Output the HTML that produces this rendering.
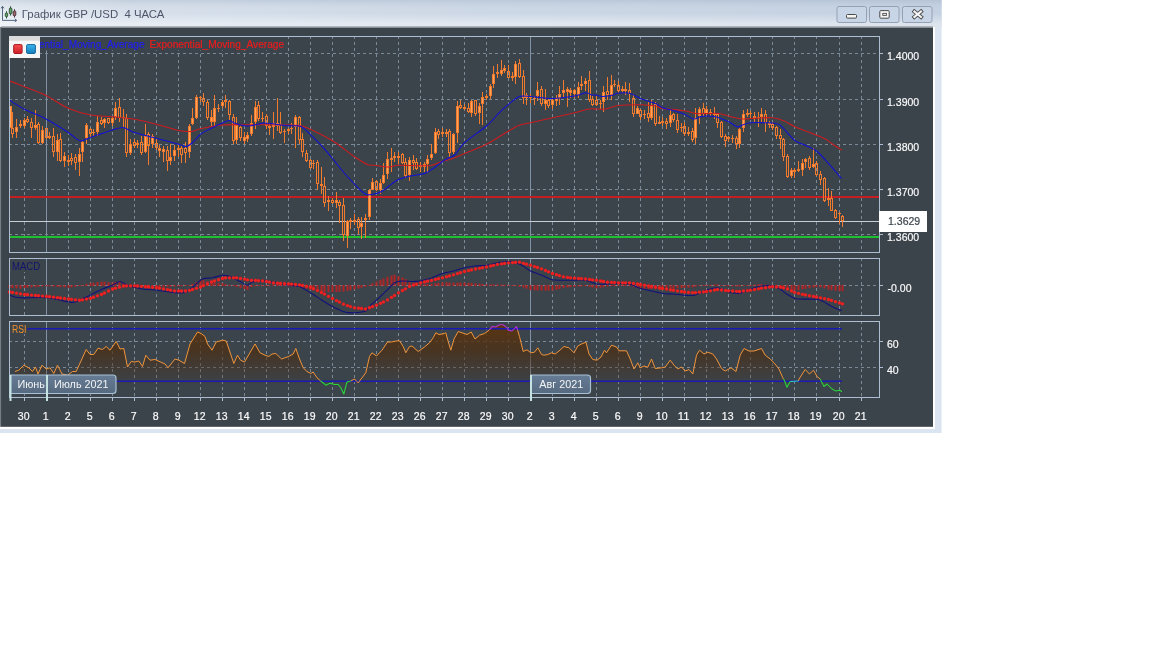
<!DOCTYPE html>
<html lang="ru"><head><meta charset="utf-8"><title>График GBP /USD 4 ЧАСА</title>
<style>html,body{margin:0;padding:0;background:#fff;width:1152px;height:648px;overflow:hidden}svg text{white-space:pre}</style></head>
<body>
<svg width="1152" height="648" viewBox="0 0 1152 648" style="display:block;will-change:transform">
<defs>
<linearGradient id="tb" x1="0" y1="0" x2="1" y2="0"><stop offset="0" stop-color="#e4eaf1"/><stop offset="0.14" stop-color="#d6dfea"/><stop offset="0.5" stop-color="#ccd7e5"/><stop offset="1" stop-color="#c3d0e1"/></linearGradient>
<linearGradient id="tbv" x1="0" y1="0" x2="0" y2="1"><stop offset="0" stop-color="#7f96b0" stop-opacity="0.22"/><stop offset="0.45" stop-color="#ffffff" stop-opacity="0"/><stop offset="0.85" stop-color="#ffffff" stop-opacity="0.42"/><stop offset="1" stop-color="#ffffff" stop-opacity="0.42"/></linearGradient>
<linearGradient id="rsif" gradientUnits="userSpaceOnUse" x1="0" y1="324" x2="0" y2="386"><stop offset="0" stop-color="#5e350e" stop-opacity="0.97"/><stop offset="0.45" stop-color="#4c2e12" stop-opacity="0.7"/><stop offset="1" stop-color="#4a2e14" stop-opacity="0"/></linearGradient>
<linearGradient id="mon" x1="0" y1="0" x2="0" y2="1"><stop offset="0" stop-color="#667c95"/><stop offset="1" stop-color="#56697f"/></linearGradient>
<linearGradient id="redb" x1="0" y1="0" x2="0" y2="1"><stop offset="0" stop-color="#f65050"/><stop offset="1" stop-color="#cc1c26"/></linearGradient>
<linearGradient id="blub" x1="0" y1="0" x2="0" y2="1"><stop offset="0" stop-color="#3cb6ee"/><stop offset="1" stop-color="#147cbc"/></linearGradient>
<clipPath id="cm"><rect x="10" y="36" width="870" height="216"/></clipPath>
<clipPath id="cr"><rect x="10" y="322" width="870" height="75"/></clipPath>
</defs>
<rect width="1152" height="648" fill="#ffffff"/>
<rect x="0" y="0" width="941.6" height="433" fill="#dbe5f1"/>
<rect x="0" y="0" width="941.6" height="28" fill="url(#tb)"/>
<rect x="0" y="0" width="941.6" height="28" fill="url(#tbv)"/>
<rect x="0" y="27" width="935" height="402" fill="#ffffff"/>
<rect x="1" y="27.5" width="932" height="399.3" fill="#3b434b"/>
<rect x="0" y="27" width="1.1" height="399.8" fill="#767d85"/>
<rect x="1" y="26" width="932" height="1" fill="#9aa0a6" opacity="0.7"/><rect x="1" y="27" width="932" height="1" fill="#8a9096"/>
<text x="21.8" y="18.2" font-family="Liberation Sans, sans-serif" font-size="11.4" fill="#50556a">График GBP /USD  4 ЧАСА</text>
<g fill="none" stroke="#4d627c" stroke-width="0.95"><path d="M2.5 6.6V20.4H16.4"/><path d="M1.1 8.3L2.5 6.3L3.9 8.3M14.9 19L16.8 20.4L14.9 21.8" stroke-width="1"/></g>
<g stroke-width="1"><path d="M6.5 11.2V18.5" stroke="#2f5a3a"/><rect x="5.3" y="13" width="2.4" height="3.7" rx="0.9" fill="#62a862" stroke="#2a4a34" stroke-width="0.9"/><path d="M10.6 6.2V15.6" stroke="#2f5a3a"/><rect x="9.3" y="8.1" width="2.6" height="5.7" rx="0.9" fill="#62a862" stroke="#2a4a34" stroke-width="0.9"/><path d="M14.5 9.2V17.5" stroke="#4a3540"/><rect x="13.2" y="11" width="2.6" height="4.8" rx="0.9" fill="#a46868" stroke="#44303a" stroke-width="0.9"/></g>
<rect x="837" y="6.5" width="29.5" height="16" rx="2" fill="#c8d5e6" stroke="#93a1b5" stroke-width="1"/>
<rect x="869.5" y="6.5" width="29.5" height="16" rx="2" fill="#c8d5e6" stroke="#93a1b5" stroke-width="1"/>
<rect x="902.5" y="6.5" width="29.5" height="16" rx="2" fill="#c8d5e6" stroke="#93a1b5" stroke-width="1"/>
<rect x="846.5" y="14.5" width="10" height="3.6" rx="1" fill="#f4f4f4" stroke="#4a4a4a" stroke-width="1"/>
<rect x="879.8" y="10.6" width="9.4" height="7.6" rx="1" fill="#f4f4f4" stroke="#4a4a4a" stroke-width="1"/><rect x="882.8" y="13.4" width="3.6" height="2" fill="#f4f4f4" stroke="#4a4a4a" stroke-width="0.9"/>
<g fill="none" stroke-linecap="square"><path d="M914.4 11.5L921 17M921 11.5L914.4 17" stroke="#4a4a4a" stroke-width="3.9"/><path d="M914.4 11.5L921 17M921 11.5L914.4 17" stroke="#f6f6f6" stroke-width="2.1"/></g>
<path d="M46.5 36V252" stroke="#8292a6" stroke-width="1" shape-rendering="crispEdges"/>
<path d="M530.5 36V252" stroke="#8292a6" stroke-width="1" shape-rendering="crispEdges"/>
<path d="M24.5 36V252M68.5 36V252M90.5 36V252M112.5 36V252M134.5 36V252M156.5 36V252M178.5 36V252M200.5 36V252M222.5 36V252M244.5 36V252M266.5 36V252M288.5 36V252M310.5 36V252M332.5 36V252M354.5 36V252M376.5 36V252M398.5 36V252M420.5 36V252M442.5 36V252M464.5 36V252M486.5 36V252M508.5 36V252M552.5 36V252M574.5 36V252M596.5 36V252M618.5 36V252M640.5 36V252M662.5 36V252M684.5 36V252M706.5 36V252M728.5 36V252M750.5 36V252M772.5 36V252M794.5 36V252M816.5 36V252M839.5 36V252M861.5 36V252" stroke="#7b8997" stroke-width="1" stroke-dasharray="3 3" shape-rendering="crispEdges" fill="none"/>
<path d="M46.5 258V315" stroke="#8292a6" stroke-width="1" shape-rendering="crispEdges"/>
<path d="M530.5 258V315" stroke="#8292a6" stroke-width="1" shape-rendering="crispEdges"/>
<path d="M24.5 258V315M68.5 258V315M90.5 258V315M112.5 258V315M134.5 258V315M156.5 258V315M178.5 258V315M200.5 258V315M222.5 258V315M244.5 258V315M266.5 258V315M288.5 258V315M310.5 258V315M332.5 258V315M354.5 258V315M376.5 258V315M398.5 258V315M420.5 258V315M442.5 258V315M464.5 258V315M486.5 258V315M508.5 258V315M552.5 258V315M574.5 258V315M596.5 258V315M618.5 258V315M640.5 258V315M662.5 258V315M684.5 258V315M706.5 258V315M728.5 258V315M750.5 258V315M772.5 258V315M794.5 258V315M816.5 258V315M839.5 258V315M861.5 258V315" stroke="#7b8997" stroke-width="1" stroke-dasharray="3 3" shape-rendering="crispEdges" fill="none"/>
<path d="M46.5 321V397" stroke="#8292a6" stroke-width="1" shape-rendering="crispEdges"/>
<path d="M530.5 321V397" stroke="#8292a6" stroke-width="1" shape-rendering="crispEdges"/>
<path d="M24.5 321V397M68.5 321V397M90.5 321V397M112.5 321V397M134.5 321V397M156.5 321V397M178.5 321V397M200.5 321V397M222.5 321V397M244.5 321V397M266.5 321V397M288.5 321V397M310.5 321V397M332.5 321V397M354.5 321V397M376.5 321V397M398.5 321V397M420.5 321V397M442.5 321V397M464.5 321V397M486.5 321V397M508.5 321V397M552.5 321V397M574.5 321V397M596.5 321V397M618.5 321V397M640.5 321V397M662.5 321V397M684.5 321V397M706.5 321V397M728.5 321V397M750.5 321V397M772.5 321V397M794.5 321V397M816.5 321V397M839.5 321V397M861.5 321V397" stroke="#7b8997" stroke-width="1" stroke-dasharray="3 3" shape-rendering="crispEdges" fill="none"/>
<path d="M9 53.5H879M9 99.5H879M9 144.5H879M9 189.5H879M9 234.5H879" stroke="#7b8997" stroke-width="1" stroke-dasharray="3 3" shape-rendering="crispEdges" fill="none"/>
<path d="M9 285.5H879" stroke="#7b8997" stroke-width="1" stroke-dasharray="3 3" shape-rendering="crispEdges" fill="none"/>
<path d="M9 341.5H879M9 367.5H879" stroke="#7b8997" stroke-width="1" stroke-dasharray="3 3" shape-rendering="crispEdges" fill="none"/>
<g shape-rendering="crispEdges"><rect x="10" y="196" width="869" height="2" fill="#c41e22"/><rect x="10" y="220.5" width="869" height="1.2" fill="#c9ced4"/><rect x="10" y="236" width="869" height="1.6" fill="#1fc030"/></g>
<g clip-path="url(#cm)" shape-rendering="crispEdges"><path d="M10.5 106V128" stroke="#f07a2e" stroke-width="1"/><rect x="9.5" y="106.5" width="2" height="21" fill="#ffa458" stroke="#f07a2e" stroke-width="1"/><path d="M12.5 112V128M12.5 134V138" stroke="#f07a2e" stroke-width="1"/><rect x="11.5" y="128.5" width="2" height="5" fill="none" stroke="#f07a2e" stroke-width="1"/><path d="M16.5 119V138" stroke="#f07a2e" stroke-width="1"/><rect x="15.5" y="127.5" width="2" height="4" fill="#ffa458" stroke="#f07a2e" stroke-width="1"/><path d="M20.5 120V128" stroke="#f07a2e" stroke-width="1"/><rect x="19" y="124" width="3" height="2" fill="#f07a2e"/><path d="M24.5 118V128" stroke="#f07a2e" stroke-width="1"/><rect x="23.5" y="120.5" width="2" height="5" fill="#ffa458" stroke="#f07a2e" stroke-width="1"/><path d="M27.5 116V119M27.5 122V123" stroke="#f07a2e" stroke-width="1"/><rect x="26.5" y="119.5" width="2" height="2" fill="none" stroke="#f07a2e" stroke-width="1"/><path d="M31.5 118V122M31.5 128V138" stroke="#f07a2e" stroke-width="1"/><rect x="30.5" y="122.5" width="2" height="5" fill="none" stroke="#f07a2e" stroke-width="1"/><path d="M35.5 110V130" stroke="#f07a2e" stroke-width="1"/><rect x="34.5" y="125.5" width="2" height="2" fill="#ffa458" stroke="#f07a2e" stroke-width="1"/><path d="M38.5 122V124M38.5 143V144" stroke="#f07a2e" stroke-width="1"/><rect x="37.5" y="124.5" width="2" height="18" fill="none" stroke="#f07a2e" stroke-width="1"/><path d="M42.5 126V144" stroke="#f07a2e" stroke-width="1"/><rect x="41.5" y="130.5" width="2" height="12" fill="#ffa458" stroke="#f07a2e" stroke-width="1"/><path d="M46.5 128V128M46.5 138V139" stroke="#f07a2e" stroke-width="1"/><rect x="45.5" y="128.5" width="2" height="9" fill="none" stroke="#f07a2e" stroke-width="1"/><path d="M49.5 132V139" stroke="#f07a2e" stroke-width="1"/><rect x="48" y="136" width="3" height="2" fill="#f07a2e"/><path d="M53.5 128V136M53.5 152V157" stroke="#f07a2e" stroke-width="1"/><rect x="52.5" y="136.5" width="2" height="15" fill="none" stroke="#f07a2e" stroke-width="1"/><path d="M57.5 134V161" stroke="#f07a2e" stroke-width="1"/><rect x="56.5" y="140.5" width="2" height="11" fill="#ffa458" stroke="#f07a2e" stroke-width="1"/><path d="M60.5 133V139M60.5 161V162" stroke="#f07a2e" stroke-width="1"/><rect x="59.5" y="139.5" width="2" height="21" fill="none" stroke="#f07a2e" stroke-width="1"/><path d="M64.5 152V167" stroke="#f07a2e" stroke-width="1"/><rect x="63.5" y="156.5" width="2" height="4" fill="#ffa458" stroke="#f07a2e" stroke-width="1"/><path d="M68.5 155V166" stroke="#f07a2e" stroke-width="1"/><rect x="67" y="160" width="3" height="2" fill="#f07a2e"/><path d="M71.5 153V158M71.5 161V165" stroke="#f07a2e" stroke-width="1"/><rect x="70.5" y="158.5" width="2" height="2" fill="none" stroke="#f07a2e" stroke-width="1"/><path d="M75.5 154V157M75.5 163V170" stroke="#f07a2e" stroke-width="1"/><rect x="74.5" y="157.5" width="2" height="5" fill="none" stroke="#f07a2e" stroke-width="1"/><path d="M79.5 148V176" stroke="#f07a2e" stroke-width="1"/><rect x="78.5" y="154.5" width="2" height="7" fill="#ffa458" stroke="#f07a2e" stroke-width="1"/><path d="M82.5 140V162" stroke="#f07a2e" stroke-width="1"/><rect x="81.5" y="142.5" width="2" height="9" fill="#ffa458" stroke="#f07a2e" stroke-width="1"/><path d="M86.5 123V144" stroke="#f07a2e" stroke-width="1"/><rect x="85.5" y="125.5" width="2" height="12" fill="#ffa458" stroke="#f07a2e" stroke-width="1"/><path d="M90.5 128V129M90.5 134V137" stroke="#f07a2e" stroke-width="1"/><rect x="89.5" y="129.5" width="2" height="4" fill="none" stroke="#f07a2e" stroke-width="1"/><path d="M93.5 129V136" stroke="#f07a2e" stroke-width="1"/><rect x="92" y="132" width="3" height="1" fill="#f07a2e"/><path d="M97.5 116V136" stroke="#f07a2e" stroke-width="1"/><rect x="96.5" y="122.5" width="2" height="9" fill="#ffa458" stroke="#f07a2e" stroke-width="1"/><path d="M101.5 117V120M101.5 124V125" stroke="#f07a2e" stroke-width="1"/><rect x="100.5" y="120.5" width="2" height="3" fill="none" stroke="#f07a2e" stroke-width="1"/><path d="M104.5 118V128" stroke="#f07a2e" stroke-width="1"/><rect x="103.5" y="119.5" width="2" height="3" fill="#ffa458" stroke="#f07a2e" stroke-width="1"/><path d="M108.5 118V118M108.5 123V124" stroke="#f07a2e" stroke-width="1"/><rect x="107.5" y="118.5" width="2" height="4" fill="none" stroke="#f07a2e" stroke-width="1"/><path d="M112.5 117V126" stroke="#f07a2e" stroke-width="1"/><rect x="111.5" y="118.5" width="2" height="4" fill="#ffa458" stroke="#f07a2e" stroke-width="1"/><path d="M115.5 102V120" stroke="#f07a2e" stroke-width="1"/><rect x="114.5" y="108.5" width="2" height="8" fill="#ffa458" stroke="#f07a2e" stroke-width="1"/><path d="M119.5 98V107M119.5 118V122" stroke="#f07a2e" stroke-width="1"/><rect x="118.5" y="107.5" width="2" height="10" fill="none" stroke="#f07a2e" stroke-width="1"/><path d="M123.5 109V128" stroke="#f07a2e" stroke-width="1"/><rect x="122" y="117" width="3" height="1" fill="#f07a2e"/><path d="M126.5 114V118M126.5 153V157" stroke="#f07a2e" stroke-width="1"/><rect x="125.5" y="118.5" width="2" height="34" fill="none" stroke="#f07a2e" stroke-width="1"/><path d="M130.5 139V155" stroke="#f07a2e" stroke-width="1"/><rect x="129.5" y="144.5" width="2" height="8" fill="#ffa458" stroke="#f07a2e" stroke-width="1"/><path d="M134.5 139V142M134.5 146V148" stroke="#f07a2e" stroke-width="1"/><rect x="133.5" y="142.5" width="2" height="3" fill="none" stroke="#f07a2e" stroke-width="1"/><path d="M137.5 140V148" stroke="#f07a2e" stroke-width="1"/><rect x="136" y="143" width="3" height="2" fill="#f07a2e"/><path d="M141.5 136V142M141.5 153V155" stroke="#f07a2e" stroke-width="1"/><rect x="140.5" y="142.5" width="2" height="10" fill="none" stroke="#f07a2e" stroke-width="1"/><path d="M145.5 124V153" stroke="#f07a2e" stroke-width="1"/><rect x="144.5" y="136.5" width="2" height="15" fill="#ffa458" stroke="#f07a2e" stroke-width="1"/><path d="M148.5 132V134M148.5 146V165" stroke="#f07a2e" stroke-width="1"/><rect x="147.5" y="134.5" width="2" height="11" fill="none" stroke="#f07a2e" stroke-width="1"/><path d="M152.5 134V148" stroke="#f07a2e" stroke-width="1"/><rect x="151.5" y="136.5" width="2" height="7" fill="#ffa458" stroke="#f07a2e" stroke-width="1"/><path d="M156.5 139V143M156.5 148V150" stroke="#f07a2e" stroke-width="1"/><rect x="155.5" y="143.5" width="2" height="4" fill="none" stroke="#f07a2e" stroke-width="1"/><path d="M159.5 145V157" stroke="#f07a2e" stroke-width="1"/><rect x="158.5" y="148.5" width="2" height="2" fill="#ffa458" stroke="#f07a2e" stroke-width="1"/><path d="M163.5 146V162" stroke="#f07a2e" stroke-width="1"/><rect x="162.5" y="149.5" width="2" height="2" fill="#ffa458" stroke="#f07a2e" stroke-width="1"/><path d="M167.5 146V150M167.5 161V171" stroke="#f07a2e" stroke-width="1"/><rect x="166.5" y="150.5" width="2" height="10" fill="none" stroke="#f07a2e" stroke-width="1"/><path d="M170.5 144V165" stroke="#f07a2e" stroke-width="1"/><rect x="169.5" y="157.5" width="2" height="3" fill="#ffa458" stroke="#f07a2e" stroke-width="1"/><path d="M174.5 145V161" stroke="#f07a2e" stroke-width="1"/><rect x="173.5" y="150.5" width="2" height="5" fill="#ffa458" stroke="#f07a2e" stroke-width="1"/><path d="M178.5 145V157" stroke="#f07a2e" stroke-width="1"/><rect x="177" y="148" width="3" height="2" fill="#f07a2e"/><path d="M181.5 146V148M181.5 155V163" stroke="#f07a2e" stroke-width="1"/><rect x="180.5" y="148.5" width="2" height="6" fill="none" stroke="#f07a2e" stroke-width="1"/><path d="M185.5 142V148M185.5 153V163" stroke="#f07a2e" stroke-width="1"/><rect x="184.5" y="148.5" width="2" height="4" fill="none" stroke="#f07a2e" stroke-width="1"/><path d="M189.5 124V158" stroke="#f07a2e" stroke-width="1"/><rect x="188.5" y="126.5" width="2" height="25" fill="#ffa458" stroke="#f07a2e" stroke-width="1"/><path d="M192.5 108V125" stroke="#f07a2e" stroke-width="1"/><rect x="191.5" y="118.5" width="2" height="5" fill="#ffa458" stroke="#f07a2e" stroke-width="1"/><path d="M196.5 95V119" stroke="#f07a2e" stroke-width="1"/><rect x="195.5" y="97.5" width="2" height="20" fill="#ffa458" stroke="#f07a2e" stroke-width="1"/><path d="M200.5 96V102" stroke="#f07a2e" stroke-width="1"/><rect x="199" y="97" width="3" height="1" fill="#f07a2e"/><path d="M203.5 93V98M203.5 102V106" stroke="#f07a2e" stroke-width="1"/><rect x="202.5" y="98.5" width="2" height="3" fill="none" stroke="#f07a2e" stroke-width="1"/><path d="M207.5 100V102M207.5 118V120" stroke="#f07a2e" stroke-width="1"/><rect x="206.5" y="102.5" width="2" height="15" fill="none" stroke="#f07a2e" stroke-width="1"/><path d="M211.5 110V127" stroke="#f07a2e" stroke-width="1"/><rect x="210.5" y="117.5" width="2" height="4" fill="#ffa458" stroke="#f07a2e" stroke-width="1"/><path d="M214.5 95V126" stroke="#f07a2e" stroke-width="1"/><rect x="213.5" y="108.5" width="2" height="13" fill="#ffa458" stroke="#f07a2e" stroke-width="1"/><path d="M218.5 104V112" stroke="#f07a2e" stroke-width="1"/><rect x="217" y="108" width="3" height="1" fill="#f07a2e"/><path d="M222.5 100V108" stroke="#f07a2e" stroke-width="1"/><rect x="221.5" y="102.5" width="2" height="3" fill="#ffa458" stroke="#f07a2e" stroke-width="1"/><path d="M225.5 95V108" stroke="#f07a2e" stroke-width="1"/><rect x="224" y="100" width="3" height="2" fill="#f07a2e"/><path d="M229.5 100V101M229.5 115V120" stroke="#f07a2e" stroke-width="1"/><rect x="228.5" y="101.5" width="2" height="13" fill="none" stroke="#f07a2e" stroke-width="1"/><path d="M233.5 114V117M233.5 141V144" stroke="#f07a2e" stroke-width="1"/><rect x="232.5" y="117.5" width="2" height="23" fill="none" stroke="#f07a2e" stroke-width="1"/><path d="M236.5 117V144" stroke="#f07a2e" stroke-width="1"/><rect x="235.5" y="125.5" width="2" height="14" fill="#ffa458" stroke="#f07a2e" stroke-width="1"/><path d="M240.5 126V127M240.5 138V141" stroke="#f07a2e" stroke-width="1"/><rect x="239.5" y="127.5" width="2" height="10" fill="none" stroke="#f07a2e" stroke-width="1"/><path d="M244.5 132V144" stroke="#f07a2e" stroke-width="1"/><rect x="243.5" y="137.5" width="2" height="3" fill="#ffa458" stroke="#f07a2e" stroke-width="1"/><path d="M247.5 132V142" stroke="#f07a2e" stroke-width="1"/><rect x="246.5" y="135.5" width="2" height="3" fill="#ffa458" stroke="#f07a2e" stroke-width="1"/><path d="M251.5 115V136" stroke="#f07a2e" stroke-width="1"/><rect x="250.5" y="123.5" width="2" height="10" fill="#ffa458" stroke="#f07a2e" stroke-width="1"/><path d="M255.5 101V129" stroke="#f07a2e" stroke-width="1"/><rect x="254.5" y="107.5" width="2" height="14" fill="#ffa458" stroke="#f07a2e" stroke-width="1"/><path d="M258.5 101V105M258.5 119V121" stroke="#f07a2e" stroke-width="1"/><rect x="257.5" y="105.5" width="2" height="13" fill="none" stroke="#f07a2e" stroke-width="1"/><path d="M262.5 112V122" stroke="#f07a2e" stroke-width="1"/><rect x="261" y="118" width="3" height="1" fill="#f07a2e"/><path d="M266.5 114V116M266.5 126V129" stroke="#f07a2e" stroke-width="1"/><rect x="265.5" y="116.5" width="2" height="9" fill="none" stroke="#f07a2e" stroke-width="1"/><path d="M269.5 123V135" stroke="#f07a2e" stroke-width="1"/><rect x="268" y="126" width="3" height="2" fill="#f07a2e"/><path d="M273.5 112V139" stroke="#f07a2e" stroke-width="1"/><rect x="272.5" y="123.5" width="2" height="3" fill="#ffa458" stroke="#f07a2e" stroke-width="1"/><path d="M277.5 98V131" stroke="#f07a2e" stroke-width="1"/><rect x="276.5" y="123.5" width="2" height="2" fill="#ffa458" stroke="#f07a2e" stroke-width="1"/><path d="M280.5 112V124M280.5 133V134" stroke="#f07a2e" stroke-width="1"/><rect x="279.5" y="124.5" width="2" height="8" fill="none" stroke="#f07a2e" stroke-width="1"/><path d="M284.5 129V143" stroke="#f07a2e" stroke-width="1"/><rect x="283" y="131" width="3" height="1" fill="#f07a2e"/><path d="M288.5 128V134" stroke="#f07a2e" stroke-width="1"/><rect x="287" y="129" width="3" height="2" fill="#f07a2e"/><path d="M291.5 123V134" stroke="#f07a2e" stroke-width="1"/><rect x="290" y="128" width="3" height="1" fill="#f07a2e"/><path d="M295.5 115V148" stroke="#f07a2e" stroke-width="1"/><rect x="294.5" y="117.5" width="2" height="9" fill="#ffa458" stroke="#f07a2e" stroke-width="1"/><path d="M299.5 116V117M299.5 140V144" stroke="#f07a2e" stroke-width="1"/><rect x="298.5" y="117.5" width="2" height="22" fill="none" stroke="#f07a2e" stroke-width="1"/><path d="M302.5 133V139M302.5 152V157" stroke="#f07a2e" stroke-width="1"/><rect x="301.5" y="139.5" width="2" height="12" fill="none" stroke="#f07a2e" stroke-width="1"/><path d="M306.5 150V153M306.5 161V162" stroke="#f07a2e" stroke-width="1"/><rect x="305.5" y="153.5" width="2" height="7" fill="none" stroke="#f07a2e" stroke-width="1"/><path d="M310.5 159V160M310.5 168V169" stroke="#f07a2e" stroke-width="1"/><rect x="309.5" y="160.5" width="2" height="7" fill="none" stroke="#f07a2e" stroke-width="1"/><path d="M313.5 160V169" stroke="#f07a2e" stroke-width="1"/><rect x="312" y="163" width="3" height="1" fill="#f07a2e"/><path d="M317.5 160V162M317.5 184V190" stroke="#f07a2e" stroke-width="1"/><rect x="316.5" y="162.5" width="2" height="21" fill="none" stroke="#f07a2e" stroke-width="1"/><path d="M321.5 167V194" stroke="#f07a2e" stroke-width="1"/><rect x="320" y="184" width="3" height="2" fill="#f07a2e"/><path d="M324.5 177V186M324.5 203V207" stroke="#f07a2e" stroke-width="1"/><rect x="323.5" y="186.5" width="2" height="16" fill="none" stroke="#f07a2e" stroke-width="1"/><path d="M328.5 196V211" stroke="#f07a2e" stroke-width="1"/><rect x="327" y="200" width="3" height="2" fill="#f07a2e"/><path d="M332.5 198V200M332.5 203V204" stroke="#f07a2e" stroke-width="1"/><rect x="331.5" y="200.5" width="2" height="2" fill="none" stroke="#f07a2e" stroke-width="1"/><path d="M336.5 192V208" stroke="#f07a2e" stroke-width="1"/><rect x="335.5" y="200.5" width="2" height="2" fill="#ffa458" stroke="#f07a2e" stroke-width="1"/><path d="M339.5 200V202M339.5 206V223" stroke="#f07a2e" stroke-width="1"/><rect x="338.5" y="202.5" width="2" height="3" fill="none" stroke="#f07a2e" stroke-width="1"/><path d="M343.5 198V205M343.5 235V241" stroke="#f07a2e" stroke-width="1"/><rect x="342.5" y="205.5" width="2" height="29" fill="none" stroke="#f07a2e" stroke-width="1"/><path d="M347.5 220V248" stroke="#f07a2e" stroke-width="1"/><rect x="346.5" y="221.5" width="2" height="14" fill="#ffa458" stroke="#f07a2e" stroke-width="1"/><path d="M350.5 218V229" stroke="#f07a2e" stroke-width="1"/><rect x="349" y="220" width="3" height="2" fill="#f07a2e"/><path d="M354.5 214V225" stroke="#f07a2e" stroke-width="1"/><rect x="353" y="220" width="3" height="2" fill="#f07a2e"/><path d="M358.5 217V219M358.5 228V234" stroke="#f07a2e" stroke-width="1"/><rect x="357.5" y="219.5" width="2" height="8" fill="none" stroke="#f07a2e" stroke-width="1"/><path d="M361.5 217V239" stroke="#f07a2e" stroke-width="1"/><rect x="360.5" y="223.5" width="2" height="3" fill="#ffa458" stroke="#f07a2e" stroke-width="1"/><path d="M365.5 214V238" stroke="#f07a2e" stroke-width="1"/><rect x="364" y="218" width="3" height="2" fill="#f07a2e"/><path d="M369.5 189V220" stroke="#f07a2e" stroke-width="1"/><rect x="368.5" y="190.5" width="2" height="26" fill="#ffa458" stroke="#f07a2e" stroke-width="1"/><path d="M372.5 178V190" stroke="#f07a2e" stroke-width="1"/><rect x="371.5" y="182.5" width="2" height="7" fill="#ffa458" stroke="#f07a2e" stroke-width="1"/><path d="M376.5 180V181M376.5 190V191" stroke="#f07a2e" stroke-width="1"/><rect x="375.5" y="181.5" width="2" height="8" fill="none" stroke="#f07a2e" stroke-width="1"/><path d="M380.5 179V194" stroke="#f07a2e" stroke-width="1"/><rect x="379.5" y="183.5" width="2" height="6" fill="#ffa458" stroke="#f07a2e" stroke-width="1"/><path d="M383.5 163V184" stroke="#f07a2e" stroke-width="1"/><rect x="382.5" y="175.5" width="2" height="7" fill="#ffa458" stroke="#f07a2e" stroke-width="1"/><path d="M387.5 152V179" stroke="#f07a2e" stroke-width="1"/><rect x="386.5" y="159.5" width="2" height="14" fill="#ffa458" stroke="#f07a2e" stroke-width="1"/><path d="M391.5 148V172" stroke="#f07a2e" stroke-width="1"/><rect x="390" y="158" width="3" height="2" fill="#f07a2e"/><path d="M394.5 152V162" stroke="#f07a2e" stroke-width="1"/><rect x="393" y="156" width="3" height="2" fill="#f07a2e"/><path d="M398.5 152V164" stroke="#f07a2e" stroke-width="1"/><rect x="397" y="156" width="3" height="2" fill="#f07a2e"/><path d="M402.5 153V154M402.5 163V164" stroke="#f07a2e" stroke-width="1"/><rect x="401.5" y="154.5" width="2" height="8" fill="none" stroke="#f07a2e" stroke-width="1"/><path d="M405.5 158V162M405.5 176V178" stroke="#f07a2e" stroke-width="1"/><rect x="404.5" y="162.5" width="2" height="13" fill="none" stroke="#f07a2e" stroke-width="1"/><path d="M409.5 157V181" stroke="#f07a2e" stroke-width="1"/><rect x="408.5" y="160.5" width="2" height="14" fill="#ffa458" stroke="#f07a2e" stroke-width="1"/><path d="M413.5 155V160M413.5 163V170" stroke="#f07a2e" stroke-width="1"/><rect x="412.5" y="160.5" width="2" height="2" fill="none" stroke="#f07a2e" stroke-width="1"/><path d="M416.5 158V162M416.5 169V170" stroke="#f07a2e" stroke-width="1"/><rect x="415.5" y="162.5" width="2" height="6" fill="none" stroke="#f07a2e" stroke-width="1"/><path d="M420.5 162V172" stroke="#f07a2e" stroke-width="1"/><rect x="419" y="165" width="3" height="2" fill="#f07a2e"/><path d="M424.5 162V172" stroke="#f07a2e" stroke-width="1"/><rect x="423.5" y="164.5" width="2" height="2" fill="#ffa458" stroke="#f07a2e" stroke-width="1"/><path d="M427.5 155V173" stroke="#f07a2e" stroke-width="1"/><rect x="426.5" y="159.5" width="2" height="4" fill="#ffa458" stroke="#f07a2e" stroke-width="1"/><path d="M431.5 144V160" stroke="#f07a2e" stroke-width="1"/><rect x="430.5" y="154.5" width="2" height="3" fill="#ffa458" stroke="#f07a2e" stroke-width="1"/><path d="M435.5 128V154" stroke="#f07a2e" stroke-width="1"/><rect x="434.5" y="132.5" width="2" height="20" fill="#ffa458" stroke="#f07a2e" stroke-width="1"/><path d="M438.5 129V131M438.5 135V139" stroke="#f07a2e" stroke-width="1"/><rect x="437.5" y="131.5" width="2" height="3" fill="none" stroke="#f07a2e" stroke-width="1"/><path d="M442.5 128V137" stroke="#f07a2e" stroke-width="1"/><rect x="441" y="132" width="3" height="2" fill="#f07a2e"/><path d="M446.5 129V137" stroke="#f07a2e" stroke-width="1"/><rect x="445" y="132" width="3" height="2" fill="#f07a2e"/><path d="M449.5 129V131M449.5 153V158" stroke="#f07a2e" stroke-width="1"/><rect x="448.5" y="131.5" width="2" height="21" fill="none" stroke="#f07a2e" stroke-width="1"/><path d="M453.5 133V154" stroke="#f07a2e" stroke-width="1"/><rect x="452.5" y="134.5" width="2" height="17" fill="#ffa458" stroke="#f07a2e" stroke-width="1"/><path d="M457.5 101V143" stroke="#f07a2e" stroke-width="1"/><rect x="456.5" y="106.5" width="2" height="26" fill="#ffa458" stroke="#f07a2e" stroke-width="1"/><path d="M460.5 100V105M460.5 108V109" stroke="#f07a2e" stroke-width="1"/><rect x="459.5" y="105.5" width="2" height="2" fill="none" stroke="#f07a2e" stroke-width="1"/><path d="M464.5 104V110" stroke="#f07a2e" stroke-width="1"/><rect x="463" y="107" width="3" height="2" fill="#f07a2e"/><path d="M468.5 103V108M468.5 112V113" stroke="#f07a2e" stroke-width="1"/><rect x="467.5" y="108.5" width="2" height="3" fill="none" stroke="#f07a2e" stroke-width="1"/><path d="M471.5 100V117" stroke="#f07a2e" stroke-width="1"/><rect x="470.5" y="101.5" width="2" height="11" fill="#ffa458" stroke="#f07a2e" stroke-width="1"/><path d="M475.5 100V100M475.5 114V116" stroke="#f07a2e" stroke-width="1"/><rect x="474.5" y="100.5" width="2" height="13" fill="none" stroke="#f07a2e" stroke-width="1"/><path d="M479.5 103V124" stroke="#f07a2e" stroke-width="1"/><rect x="478.5" y="106.5" width="2" height="6" fill="#ffa458" stroke="#f07a2e" stroke-width="1"/><path d="M482.5 92V125" stroke="#f07a2e" stroke-width="1"/><rect x="481.5" y="97.5" width="2" height="6" fill="#ffa458" stroke="#f07a2e" stroke-width="1"/><path d="M486.5 94V100" stroke="#f07a2e" stroke-width="1"/><rect x="485" y="96" width="3" height="2" fill="#f07a2e"/><path d="M490.5 84V99" stroke="#f07a2e" stroke-width="1"/><rect x="489.5" y="86.5" width="2" height="9" fill="#ffa458" stroke="#f07a2e" stroke-width="1"/><path d="M493.5 66V88" stroke="#f07a2e" stroke-width="1"/><rect x="492.5" y="74.5" width="2" height="9" fill="#ffa458" stroke="#f07a2e" stroke-width="1"/><path d="M497.5 64V78" stroke="#f07a2e" stroke-width="1"/><rect x="496" y="72" width="3" height="2" fill="#f07a2e"/><path d="M501.5 60V76" stroke="#f07a2e" stroke-width="1"/><rect x="500.5" y="70.5" width="2" height="3" fill="#ffa458" stroke="#f07a2e" stroke-width="1"/><path d="M504.5 65V73" stroke="#f07a2e" stroke-width="1"/><rect x="503.5" y="68.5" width="2" height="2" fill="#ffa458" stroke="#f07a2e" stroke-width="1"/><path d="M508.5 65V71M508.5 78V78" stroke="#f07a2e" stroke-width="1"/><rect x="507.5" y="71.5" width="2" height="6" fill="none" stroke="#f07a2e" stroke-width="1"/><path d="M512.5 72V81" stroke="#f07a2e" stroke-width="1"/><rect x="511" y="76" width="3" height="2" fill="#f07a2e"/><path d="M515.5 61V84" stroke="#f07a2e" stroke-width="1"/><rect x="514.5" y="64.5" width="2" height="12" fill="#ffa458" stroke="#f07a2e" stroke-width="1"/><path d="M519.5 59V63M519.5 77V78" stroke="#f07a2e" stroke-width="1"/><rect x="518.5" y="63.5" width="2" height="13" fill="none" stroke="#f07a2e" stroke-width="1"/><path d="M523.5 70V76M523.5 98V104" stroke="#f07a2e" stroke-width="1"/><rect x="522.5" y="76.5" width="2" height="21" fill="none" stroke="#f07a2e" stroke-width="1"/><path d="M526.5 93V105" stroke="#f07a2e" stroke-width="1"/><rect x="525.5" y="95.5" width="2" height="2" fill="#ffa458" stroke="#f07a2e" stroke-width="1"/><path d="M530.5 94V103" stroke="#f07a2e" stroke-width="1"/><rect x="529" y="96" width="3" height="2" fill="#f07a2e"/><path d="M534.5 96V105" stroke="#f07a2e" stroke-width="1"/><rect x="533" y="98" width="3" height="1" fill="#f07a2e"/><path d="M537.5 82V101" stroke="#f07a2e" stroke-width="1"/><rect x="536.5" y="90.5" width="2" height="5" fill="#ffa458" stroke="#f07a2e" stroke-width="1"/><path d="M541.5 86V89M541.5 104V106" stroke="#f07a2e" stroke-width="1"/><rect x="540.5" y="89.5" width="2" height="14" fill="none" stroke="#f07a2e" stroke-width="1"/><path d="M545.5 89V110" stroke="#f07a2e" stroke-width="1"/><rect x="544.5" y="100.5" width="2" height="3" fill="#ffa458" stroke="#f07a2e" stroke-width="1"/><path d="M548.5 98V100M548.5 106V108" stroke="#f07a2e" stroke-width="1"/><rect x="547.5" y="100.5" width="2" height="5" fill="none" stroke="#f07a2e" stroke-width="1"/><path d="M552.5 98V109" stroke="#f07a2e" stroke-width="1"/><rect x="551.5" y="100.5" width="2" height="4" fill="#ffa458" stroke="#f07a2e" stroke-width="1"/><path d="M556.5 95V106" stroke="#f07a2e" stroke-width="1"/><rect x="555.5" y="98.5" width="2" height="2" fill="#ffa458" stroke="#f07a2e" stroke-width="1"/><path d="M559.5 86V105" stroke="#f07a2e" stroke-width="1"/><rect x="558.5" y="94.5" width="2" height="3" fill="#ffa458" stroke="#f07a2e" stroke-width="1"/><path d="M563.5 80V98" stroke="#f07a2e" stroke-width="1"/><rect x="562.5" y="90.5" width="2" height="2" fill="#ffa458" stroke="#f07a2e" stroke-width="1"/><path d="M567.5 87V107" stroke="#f07a2e" stroke-width="1"/><rect x="566.5" y="89.5" width="2" height="2" fill="#ffa458" stroke="#f07a2e" stroke-width="1"/><path d="M570.5 88V98" stroke="#f07a2e" stroke-width="1"/><rect x="569.5" y="90.5" width="2" height="2" fill="#ffa458" stroke="#f07a2e" stroke-width="1"/><path d="M574.5 89V98" stroke="#f07a2e" stroke-width="1"/><rect x="573.5" y="90.5" width="2" height="3" fill="#ffa458" stroke="#f07a2e" stroke-width="1"/><path d="M578.5 82V98" stroke="#f07a2e" stroke-width="1"/><rect x="577.5" y="87.5" width="2" height="7" fill="#ffa458" stroke="#f07a2e" stroke-width="1"/><path d="M581.5 76V90" stroke="#f07a2e" stroke-width="1"/><rect x="580" y="84" width="3" height="2" fill="#f07a2e"/><path d="M585.5 78V91" stroke="#f07a2e" stroke-width="1"/><rect x="584.5" y="81.5" width="2" height="2" fill="#ffa458" stroke="#f07a2e" stroke-width="1"/><path d="M589.5 71V80M589.5 100V102" stroke="#f07a2e" stroke-width="1"/><rect x="588.5" y="80.5" width="2" height="19" fill="none" stroke="#f07a2e" stroke-width="1"/><path d="M592.5 96V99M592.5 105V106" stroke="#f07a2e" stroke-width="1"/><rect x="591.5" y="99.5" width="2" height="5" fill="none" stroke="#f07a2e" stroke-width="1"/><path d="M596.5 96V100M596.5 105V106" stroke="#f07a2e" stroke-width="1"/><rect x="595.5" y="100.5" width="2" height="4" fill="none" stroke="#f07a2e" stroke-width="1"/><path d="M600.5 100V109" stroke="#f07a2e" stroke-width="1"/><rect x="599" y="103" width="3" height="1" fill="#f07a2e"/><path d="M603.5 86V112" stroke="#f07a2e" stroke-width="1"/><rect x="602.5" y="92.5" width="2" height="9" fill="#ffa458" stroke="#f07a2e" stroke-width="1"/><path d="M607.5 77V91M607.5 95V100" stroke="#f07a2e" stroke-width="1"/><rect x="606.5" y="91.5" width="2" height="3" fill="none" stroke="#f07a2e" stroke-width="1"/><path d="M611.5 75V100" stroke="#f07a2e" stroke-width="1"/><rect x="610.5" y="85.5" width="2" height="9" fill="#ffa458" stroke="#f07a2e" stroke-width="1"/><path d="M614.5 80V87" stroke="#f07a2e" stroke-width="1"/><rect x="613" y="84" width="3" height="1" fill="#f07a2e"/><path d="M618.5 81V85M618.5 91V93" stroke="#f07a2e" stroke-width="1"/><rect x="617.5" y="85.5" width="2" height="5" fill="none" stroke="#f07a2e" stroke-width="1"/><path d="M622.5 86V93" stroke="#f07a2e" stroke-width="1"/><rect x="621" y="89" width="3" height="2" fill="#f07a2e"/><path d="M625.5 82V95" stroke="#f07a2e" stroke-width="1"/><rect x="624" y="89" width="3" height="2" fill="#f07a2e"/><path d="M629.5 83V90M629.5 94V102" stroke="#f07a2e" stroke-width="1"/><rect x="628.5" y="90.5" width="2" height="3" fill="none" stroke="#f07a2e" stroke-width="1"/><path d="M633.5 95V98M633.5 114V117" stroke="#f07a2e" stroke-width="1"/><rect x="632.5" y="98.5" width="2" height="15" fill="none" stroke="#f07a2e" stroke-width="1"/><path d="M637.5 106V114" stroke="#f07a2e" stroke-width="1"/><rect x="636.5" y="108.5" width="2" height="5" fill="#ffa458" stroke="#f07a2e" stroke-width="1"/><path d="M640.5 109V110M640.5 117V120" stroke="#f07a2e" stroke-width="1"/><rect x="639.5" y="110.5" width="2" height="6" fill="none" stroke="#f07a2e" stroke-width="1"/><path d="M644.5 110V119" stroke="#f07a2e" stroke-width="1"/><rect x="643" y="114" width="3" height="1" fill="#f07a2e"/><path d="M648.5 102V113M648.5 118V122" stroke="#f07a2e" stroke-width="1"/><rect x="647.5" y="113.5" width="2" height="4" fill="none" stroke="#f07a2e" stroke-width="1"/><path d="M651.5 100V120" stroke="#f07a2e" stroke-width="1"/><rect x="650.5" y="105.5" width="2" height="12" fill="#ffa458" stroke="#f07a2e" stroke-width="1"/><path d="M655.5 102V104M655.5 124V126" stroke="#f07a2e" stroke-width="1"/><rect x="654.5" y="104.5" width="2" height="19" fill="none" stroke="#f07a2e" stroke-width="1"/><path d="M659.5 116V124" stroke="#f07a2e" stroke-width="1"/><rect x="658" y="122" width="3" height="2" fill="#f07a2e"/><path d="M662.5 117V126" stroke="#f07a2e" stroke-width="1"/><rect x="661" y="121" width="3" height="2" fill="#f07a2e"/><path d="M666.5 118V121M666.5 124V129" stroke="#f07a2e" stroke-width="1"/><rect x="665.5" y="121.5" width="2" height="2" fill="none" stroke="#f07a2e" stroke-width="1"/><path d="M670.5 110V127" stroke="#f07a2e" stroke-width="1"/><rect x="669.5" y="115.5" width="2" height="7" fill="#ffa458" stroke="#f07a2e" stroke-width="1"/><path d="M673.5 113V114M673.5 120V122" stroke="#f07a2e" stroke-width="1"/><rect x="672.5" y="114.5" width="2" height="5" fill="none" stroke="#f07a2e" stroke-width="1"/><path d="M677.5 114V120M677.5 130V133" stroke="#f07a2e" stroke-width="1"/><rect x="676.5" y="120.5" width="2" height="9" fill="none" stroke="#f07a2e" stroke-width="1"/><path d="M681.5 123V132" stroke="#f07a2e" stroke-width="1"/><rect x="680" y="127" width="3" height="1" fill="#f07a2e"/><path d="M684.5 122V126M684.5 134V136" stroke="#f07a2e" stroke-width="1"/><rect x="683.5" y="126.5" width="2" height="7" fill="none" stroke="#f07a2e" stroke-width="1"/><path d="M688.5 127V136" stroke="#f07a2e" stroke-width="1"/><rect x="687" y="132" width="3" height="2" fill="#f07a2e"/><path d="M692.5 128V131M692.5 140V142" stroke="#f07a2e" stroke-width="1"/><rect x="691.5" y="131.5" width="2" height="8" fill="none" stroke="#f07a2e" stroke-width="1"/><path d="M695.5 108V144" stroke="#f07a2e" stroke-width="1"/><rect x="694.5" y="118.5" width="2" height="19" fill="#ffa458" stroke="#f07a2e" stroke-width="1"/><path d="M699.5 107V124" stroke="#f07a2e" stroke-width="1"/><rect x="698.5" y="109.5" width="2" height="6" fill="#ffa458" stroke="#f07a2e" stroke-width="1"/><path d="M703.5 103V108M703.5 114V116" stroke="#f07a2e" stroke-width="1"/><rect x="702.5" y="108.5" width="2" height="5" fill="none" stroke="#f07a2e" stroke-width="1"/><path d="M706.5 106V116" stroke="#f07a2e" stroke-width="1"/><rect x="705.5" y="109.5" width="2" height="4" fill="#ffa458" stroke="#f07a2e" stroke-width="1"/><path d="M710.5 109V116" stroke="#f07a2e" stroke-width="1"/><rect x="709" y="112" width="3" height="2" fill="#f07a2e"/><path d="M714.5 107V119" stroke="#f07a2e" stroke-width="1"/><rect x="713" y="113" width="3" height="2" fill="#f07a2e"/><path d="M717.5 114V114M717.5 123V128" stroke="#f07a2e" stroke-width="1"/><rect x="716.5" y="114.5" width="2" height="8" fill="none" stroke="#f07a2e" stroke-width="1"/><path d="M721.5 121V122M721.5 137V138" stroke="#f07a2e" stroke-width="1"/><rect x="720.5" y="122.5" width="2" height="14" fill="none" stroke="#f07a2e" stroke-width="1"/><path d="M725.5 134V136M725.5 141V147" stroke="#f07a2e" stroke-width="1"/><rect x="724.5" y="136.5" width="2" height="4" fill="none" stroke="#f07a2e" stroke-width="1"/><path d="M728.5 136V142" stroke="#f07a2e" stroke-width="1"/><rect x="727" y="137" width="3" height="2" fill="#f07a2e"/><path d="M732.5 135V143" stroke="#f07a2e" stroke-width="1"/><rect x="731" y="138" width="3" height="1" fill="#f07a2e"/><path d="M736.5 136V138M736.5 144V149" stroke="#f07a2e" stroke-width="1"/><rect x="735.5" y="138.5" width="2" height="5" fill="none" stroke="#f07a2e" stroke-width="1"/><path d="M739.5 128V148" stroke="#f07a2e" stroke-width="1"/><rect x="738.5" y="129.5" width="2" height="14" fill="#ffa458" stroke="#f07a2e" stroke-width="1"/><path d="M743.5 110V132" stroke="#f07a2e" stroke-width="1"/><rect x="742.5" y="114.5" width="2" height="13" fill="#ffa458" stroke="#f07a2e" stroke-width="1"/><path d="M747.5 109V117" stroke="#f07a2e" stroke-width="1"/><rect x="746" y="113" width="3" height="2" fill="#f07a2e"/><path d="M750.5 111V118" stroke="#f07a2e" stroke-width="1"/><rect x="749" y="113" width="3" height="1" fill="#f07a2e"/><path d="M754.5 112V122" stroke="#f07a2e" stroke-width="1"/><rect x="753" y="116" width="3" height="2" fill="#f07a2e"/><path d="M758.5 112V127" stroke="#f07a2e" stroke-width="1"/><rect x="757" y="117" width="3" height="1" fill="#f07a2e"/><path d="M761.5 108V122" stroke="#f07a2e" stroke-width="1"/><rect x="760.5" y="114.5" width="2" height="2" fill="#ffa458" stroke="#f07a2e" stroke-width="1"/><path d="M765.5 110V114M765.5 123V132" stroke="#f07a2e" stroke-width="1"/><rect x="764.5" y="114.5" width="2" height="8" fill="none" stroke="#f07a2e" stroke-width="1"/><path d="M769.5 121V128" stroke="#f07a2e" stroke-width="1"/><rect x="768" y="123" width="3" height="2" fill="#f07a2e"/><path d="M772.5 122V124M772.5 128V130" stroke="#f07a2e" stroke-width="1"/><rect x="771.5" y="124.5" width="2" height="3" fill="none" stroke="#f07a2e" stroke-width="1"/><path d="M776.5 126V127M776.5 136V139" stroke="#f07a2e" stroke-width="1"/><rect x="775.5" y="127.5" width="2" height="8" fill="none" stroke="#f07a2e" stroke-width="1"/><path d="M780.5 129V135M780.5 139V149" stroke="#f07a2e" stroke-width="1"/><rect x="779.5" y="135.5" width="2" height="3" fill="none" stroke="#f07a2e" stroke-width="1"/><path d="M783.5 138V139M783.5 157V161" stroke="#f07a2e" stroke-width="1"/><rect x="782.5" y="139.5" width="2" height="17" fill="none" stroke="#f07a2e" stroke-width="1"/><path d="M787.5 154V156M787.5 177V178" stroke="#f07a2e" stroke-width="1"/><rect x="786.5" y="156.5" width="2" height="20" fill="none" stroke="#f07a2e" stroke-width="1"/><path d="M791.5 168V178" stroke="#f07a2e" stroke-width="1"/><rect x="790.5" y="170.5" width="2" height="5" fill="#ffa458" stroke="#f07a2e" stroke-width="1"/><path d="M794.5 168V178" stroke="#f07a2e" stroke-width="1"/><rect x="793" y="170" width="3" height="2" fill="#f07a2e"/><path d="M798.5 161V172" stroke="#f07a2e" stroke-width="1"/><rect x="797" y="169" width="3" height="2" fill="#f07a2e"/><path d="M802.5 159V176" stroke="#f07a2e" stroke-width="1"/><rect x="801.5" y="163.5" width="2" height="6" fill="#ffa458" stroke="#f07a2e" stroke-width="1"/><path d="M805.5 158V168" stroke="#f07a2e" stroke-width="1"/><rect x="804.5" y="159.5" width="2" height="2" fill="#ffa458" stroke="#f07a2e" stroke-width="1"/><path d="M809.5 156V158M809.5 168V170" stroke="#f07a2e" stroke-width="1"/><rect x="808.5" y="158.5" width="2" height="9" fill="none" stroke="#f07a2e" stroke-width="1"/><path d="M813.5 148V168" stroke="#f07a2e" stroke-width="1"/><rect x="812.5" y="164.5" width="2" height="2" fill="#ffa458" stroke="#f07a2e" stroke-width="1"/><path d="M816.5 161V163M816.5 175V176" stroke="#f07a2e" stroke-width="1"/><rect x="815.5" y="163.5" width="2" height="11" fill="none" stroke="#f07a2e" stroke-width="1"/><path d="M820.5 171V174M820.5 180V185" stroke="#f07a2e" stroke-width="1"/><rect x="819.5" y="174.5" width="2" height="5" fill="none" stroke="#f07a2e" stroke-width="1"/><path d="M824.5 177V178M824.5 201V202" stroke="#f07a2e" stroke-width="1"/><rect x="823.5" y="178.5" width="2" height="22" fill="none" stroke="#f07a2e" stroke-width="1"/><path d="M828.5 188V206" stroke="#f07a2e" stroke-width="1"/><rect x="827" y="198" width="3" height="2" fill="#f07a2e"/><path d="M831.5 191V198M831.5 211V211" stroke="#f07a2e" stroke-width="1"/><rect x="830.5" y="198.5" width="2" height="12" fill="none" stroke="#f07a2e" stroke-width="1"/><path d="M835.5 209V210M835.5 218V219" stroke="#f07a2e" stroke-width="1"/><rect x="834.5" y="210.5" width="2" height="7" fill="none" stroke="#f07a2e" stroke-width="1"/><path d="M839.5 212V224" stroke="#f07a2e" stroke-width="1"/><rect x="838" y="213" width="3" height="1" fill="#f07a2e"/><path d="M842.5 215V216M842.5 221V227" stroke="#f07a2e" stroke-width="1"/><rect x="841.5" y="216.5" width="2" height="4" fill="none" stroke="#f07a2e" stroke-width="1"/></g>
<g clip-path="url(#cm)" fill="none" stroke-width="1.05" stroke-linejoin="round"><path d="M9.2 80.8C11.4 81.6 19.2 84.6 24.5 86.7C29.8 88.8 40.2 92.7 46.5 95.8C52.8 98.9 62.0 105.6 68.3 108.3C74.6 111.0 84.2 113.8 90.5 115.0C96.8 116.2 106.2 116.1 112.5 116.7C118.8 117.3 128.2 118.1 134.5 119.2C140.8 120.3 150.0 122.6 156.3 124.2C162.6 125.8 173.4 129.5 178.5 130.5C183.6 131.5 188.9 131.6 192.0 131.3C195.1 131.0 196.1 129.6 200.5 128.7C204.9 127.8 216.2 125.6 222.5 125.0C228.8 124.4 238.2 124.7 244.5 124.7C250.8 124.7 260.2 124.7 266.5 124.7C272.8 124.7 283.6 124.8 288.5 125.0C293.4 125.2 297.9 125.2 301.0 125.8C304.1 126.4 306.0 127.1 310.5 129.2C315.0 131.3 326.2 136.9 332.5 140.8C338.8 144.7 349.5 153.3 354.5 156.7C359.5 160.1 364.2 163.1 367.3 164.4C370.4 165.7 373.4 165.1 376.5 165.5C379.6 165.9 385.6 167.0 388.7 167.0C391.8 167.0 394.0 165.5 398.5 165.3C403.0 165.1 415.7 165.8 420.5 165.8C425.3 165.8 428.9 166.0 432.0 165.3C435.1 164.6 439.6 162.1 442.5 161.2C445.4 160.3 448.9 159.8 452.0 158.7C455.1 157.6 459.6 155.6 464.5 153.5C469.4 151.4 480.2 147.5 486.5 144.3C492.8 141.1 503.8 133.7 508.5 131.0C513.2 128.3 516.2 126.4 519.3 125.2C522.4 124.0 525.8 123.8 530.5 122.7C535.2 121.6 546.2 119.1 552.5 117.7C558.8 116.3 569.2 113.9 574.5 112.7C579.8 111.5 586.2 109.5 589.3 109.0C592.4 108.5 594.2 109.0 596.5 109.0C598.8 109.0 602.2 109.5 605.3 109.0C608.4 108.5 613.5 106.1 618.5 105.5C623.5 104.9 635.2 104.6 640.5 104.7C645.8 104.8 652.2 105.5 655.3 106.0C658.4 106.5 658.3 107.8 662.5 108.5C666.7 109.2 679.8 110.0 684.5 110.7C689.2 111.4 692.2 113.1 695.3 113.5C698.4 113.9 703.2 113.5 706.5 113.5C709.8 113.5 715.6 113.1 718.7 113.5C721.8 113.9 725.2 115.2 728.5 116.0C731.8 116.8 738.9 118.6 742.0 119.0C745.1 119.4 746.1 118.7 750.5 118.5C754.9 118.3 767.7 117.3 772.5 117.7C777.3 118.1 781.2 119.7 784.3 121.0C787.4 122.3 789.9 124.5 794.5 126.5C799.1 128.5 812.0 133.4 816.5 135.2C821.0 137.0 823.7 138.0 826.0 139.3C828.3 140.6 830.4 142.7 832.7 144.3C835.0 145.9 840.7 149.4 842.0 150.2" stroke="#cc1c20"/><path d="M9.2 100.0C11.4 101.3 19.2 106.5 24.5 109.2C29.8 111.9 40.2 115.9 46.5 119.2C52.8 122.5 63.5 129.4 68.3 132.5C73.1 135.6 76.8 140.1 80.0 140.8C83.2 141.5 85.9 139.0 90.5 137.5C95.1 136.0 107.8 131.4 112.5 130.0C117.2 128.6 120.2 127.1 123.3 127.5C126.4 127.9 129.8 131.0 134.5 132.5C139.2 134.0 150.0 136.6 156.3 138.3C162.6 140.0 174.3 143.0 178.5 144.2C182.7 145.4 184.0 146.7 186.0 146.5C188.0 146.3 190.6 144.3 192.7 142.5C194.8 140.7 198.1 136.1 200.5 134.2C202.9 132.3 206.2 130.8 209.3 129.2C212.4 127.6 219.6 124.2 222.5 123.0C225.4 121.8 227.6 120.5 229.3 120.5C231.0 120.5 232.1 122.2 234.3 123.0C236.5 123.8 242.1 125.4 244.5 125.8C246.9 126.2 248.4 126.2 251.0 125.8C253.6 125.4 260.5 123.4 262.7 123.0C264.9 122.6 264.6 123.1 266.5 123.3C268.4 123.5 272.9 123.8 276.0 124.2C279.1 124.6 285.0 125.5 288.5 125.8C292.0 126.1 297.6 125.2 300.7 126.5C303.8 127.8 307.5 131.9 310.5 134.6C313.5 137.3 318.4 142.3 321.5 145.7C324.6 149.1 329.5 154.9 332.5 158.5C335.5 162.1 339.4 167.4 342.5 171.0C345.6 174.6 351.7 181.1 354.5 184.0C357.3 186.9 360.1 190.0 362.0 191.5C363.9 193.0 365.4 194.5 367.5 194.8C369.6 195.1 374.4 194.0 376.5 193.5C378.6 193.0 380.3 192.2 382.0 191.2C383.7 190.2 386.3 187.9 388.7 186.2C391.1 184.5 395.5 180.9 398.5 179.5C401.5 178.1 406.4 176.9 409.5 176.2C412.6 175.5 417.9 175.1 420.5 174.5C423.1 173.9 425.7 173.1 427.8 172.0C429.9 170.9 433.2 168.5 435.3 167.0C437.4 165.5 440.6 162.8 442.5 161.5C444.4 160.2 446.9 158.8 448.7 157.8C450.5 156.8 453.0 156.7 455.3 154.5C457.6 152.3 460.0 146.8 464.5 142.7C469.0 138.6 481.5 130.3 486.5 126.0C491.5 121.7 496.2 115.8 499.3 112.7C502.4 109.6 505.6 106.6 508.5 104.3C511.4 102.0 516.2 97.6 519.3 96.5C522.4 95.4 525.8 96.2 530.5 96.5C535.2 96.8 546.2 98.6 552.5 98.5C558.8 98.4 569.7 96.8 574.5 96.0C579.3 95.2 583.6 92.9 586.0 92.7C588.4 92.5 589.5 94.3 591.0 94.7C592.5 95.1 594.9 94.9 596.5 95.2C598.1 95.5 599.8 96.5 602.0 96.5C604.2 96.5 609.6 95.7 612.0 95.2C614.4 94.7 615.9 93.2 618.5 93.0C621.1 92.8 627.2 92.7 630.3 93.5C633.4 94.3 636.9 97.1 640.5 98.5C644.1 99.9 652.2 102.2 655.3 103.5C658.4 104.8 659.6 106.6 662.5 107.7C665.4 108.8 672.2 110.1 675.3 111.0C678.4 111.9 681.9 113.2 684.5 114.3C687.1 115.4 691.4 118.6 693.7 119.0C696.0 119.4 698.5 117.2 700.3 116.8C702.1 116.4 704.4 116.0 706.5 116.0C708.6 116.0 712.2 116.0 715.3 116.8C718.4 117.6 725.4 120.4 728.5 121.8C731.6 123.2 735.1 126.3 737.0 126.8C738.9 127.3 740.1 125.8 742.0 125.2C743.9 124.6 747.2 123.1 750.5 122.7C753.8 122.3 762.2 122.7 765.3 122.7C768.4 122.7 770.4 122.6 772.5 123.0C774.6 123.4 777.1 122.7 780.2 125.2C783.3 127.7 791.3 137.5 794.5 140.2C797.7 142.9 799.6 142.8 802.7 144.3C805.8 145.8 812.7 148.1 816.5 151.0C820.3 153.9 825.7 160.4 829.3 164.3C832.9 168.2 839.8 176.5 841.5 178.5" stroke="#1212d4"/></g>
<rect x="10" y="37" width="274.5" height="13.4" fill="#3b434b"/>
<text x="144.6" y="48.3" text-anchor="end" textLength="134.5" lengthAdjust="spacingAndGlyphs" font-family="Liberation Sans, sans-serif" font-size="10.6" fill="#2020f0" stroke="#2020f0" stroke-width="0.2">Exponential_Moving_Average</text>
<text x="149.6" y="48.3" textLength="134.5" lengthAdjust="spacingAndGlyphs" font-family="Liberation Sans, sans-serif" font-size="10.6" fill="#ee1c1c" stroke="#ee1c1c" stroke-width="0.2">Exponential_Moving_Average</text>
<g fill="#bc2222" opacity="0.9"><rect x="8.5" y="285.0" width="2" height="2.9"/><rect x="11.5" y="285.0" width="2" height="3.1"/><rect x="15.5" y="285.0" width="2" height="3.4"/><rect x="19.5" y="285.0" width="2" height="3.6"/><rect x="23.5" y="285.0" width="2" height="3.0"/><rect x="26.5" y="285.0" width="2" height="2.7"/><rect x="30.5" y="285.0" width="2" height="2.4"/><rect x="34.5" y="285.0" width="2" height="2.1"/><rect x="37.5" y="285.0" width="2" height="1.8"/><rect x="41.5" y="285.0" width="2" height="1.5"/><rect x="45.5" y="285.0" width="2" height="1.2"/><rect x="48.5" y="285.0" width="2" height="1.3"/><rect x="52.5" y="285.0" width="2" height="1.6"/><rect x="56.5" y="285.0" width="2" height="1.9"/><rect x="59.5" y="285.0" width="2" height="2.1"/><rect x="63.5" y="285.0" width="2" height="2.4"/><rect x="67.5" y="285.0" width="2" height="2.7"/><rect x="70.5" y="285.0" width="2" height="2.4"/><rect x="74.5" y="285.0" width="2" height="1.8"/><rect x="78.5" y="285.0" width="2" height="1.0"/><rect x="81.5" y="284.9" width="2" height="1.1"/><rect x="85.5" y="283.9" width="2" height="2.1"/><rect x="89.5" y="283.0" width="2" height="3.0"/><rect x="92.5" y="282.6" width="2" height="3.4"/><rect x="96.5" y="282.1" width="2" height="3.9"/><rect x="100.5" y="281.6" width="2" height="4.4"/><rect x="103.5" y="281.7" width="2" height="4.3"/><rect x="107.5" y="282.2" width="2" height="3.8"/><rect x="111.5" y="282.6" width="2" height="3.4"/><rect x="114.5" y="282.0" width="2" height="4.0"/><rect x="118.5" y="281.1" width="2" height="4.9"/><rect x="122.5" y="283.4" width="2" height="2.6"/><rect x="125.5" y="285.0" width="2" height="1.0"/><rect x="129.5" y="285.0" width="2" height="1.0"/><rect x="133.5" y="285.0" width="2" height="1.1"/><rect x="136.5" y="285.0" width="2" height="1.6"/><rect x="140.5" y="285.0" width="2" height="2.2"/><rect x="144.5" y="285.0" width="2" height="2.3"/><rect x="147.5" y="285.0" width="2" height="2.3"/><rect x="151.5" y="285.0" width="2" height="2.3"/><rect x="155.5" y="285.0" width="2" height="2.3"/><rect x="158.5" y="285.0" width="2" height="2.2"/><rect x="162.5" y="285.0" width="2" height="2.0"/><rect x="166.5" y="285.0" width="2" height="1.9"/><rect x="169.5" y="285.0" width="2" height="1.7"/><rect x="173.5" y="285.0" width="2" height="1.6"/><rect x="177.5" y="285.0" width="2" height="1.4"/><rect x="180.5" y="285.0" width="2" height="1.2"/><rect x="184.5" y="285.0" width="2" height="1.0"/><rect x="188.5" y="285.0" width="2" height="1.0"/><rect x="191.5" y="283.9" width="2" height="2.1"/><rect x="195.5" y="282.1" width="2" height="3.9"/><rect x="199.5" y="280.3" width="2" height="5.7"/><rect x="202.5" y="279.9" width="2" height="6.1"/><rect x="206.5" y="281.1" width="2" height="4.9"/><rect x="210.5" y="282.3" width="2" height="3.7"/><rect x="213.5" y="282.7" width="2" height="3.3"/><rect x="217.5" y="282.9" width="2" height="3.1"/><rect x="221.5" y="283.1" width="2" height="2.9"/><rect x="224.5" y="284.2" width="2" height="1.8"/><rect x="228.5" y="284.8" width="2" height="1.2"/><rect x="232.5" y="285.0" width="2" height="1.0"/><rect x="235.5" y="285.0" width="2" height="1.8"/><rect x="239.5" y="285.0" width="2" height="3.1"/><rect x="243.5" y="285.0" width="2" height="4.1"/><rect x="246.5" y="285.0" width="2" height="5.0"/><rect x="250.5" y="285.0" width="2" height="2.1"/><rect x="254.5" y="285.0" width="2" height="1.1"/><rect x="257.5" y="285.0" width="2" height="1.0"/><rect x="261.5" y="285.0" width="2" height="1.0"/><rect x="265.5" y="285.0" width="2" height="1.0"/><rect x="268.5" y="285.0" width="2" height="1.0"/><rect x="272.5" y="285.0" width="2" height="1.0"/><rect x="276.5" y="285.0" width="2" height="1.0"/><rect x="279.5" y="285.0" width="2" height="1.0"/><rect x="283.5" y="285.0" width="2" height="1.0"/><rect x="287.5" y="285.0" width="2" height="1.1"/><rect x="290.5" y="285.0" width="2" height="1.2"/><rect x="294.5" y="285.0" width="2" height="1.4"/><rect x="298.5" y="285.0" width="2" height="1.6"/><rect x="301.5" y="285.0" width="2" height="2.5"/><rect x="305.5" y="285.0" width="2" height="3.7"/><rect x="309.5" y="285.0" width="2" height="5.0"/><rect x="312.5" y="285.0" width="2" height="5.4"/><rect x="316.5" y="285.0" width="2" height="6.0"/><rect x="320.5" y="285.0" width="2" height="6.7"/><rect x="323.5" y="285.0" width="2" height="6.9"/><rect x="327.5" y="285.0" width="2" height="7.0"/><rect x="331.5" y="285.0" width="2" height="7.2"/><rect x="335.5" y="285.0" width="2" height="7.0"/><rect x="338.5" y="285.0" width="2" height="6.8"/><rect x="342.5" y="285.0" width="2" height="6.6"/><rect x="346.5" y="285.0" width="2" height="5.9"/><rect x="349.5" y="285.0" width="2" height="5.3"/><rect x="353.5" y="285.0" width="2" height="4.5"/><rect x="357.5" y="285.0" width="2" height="3.5"/><rect x="360.5" y="285.0" width="2" height="2.8"/><rect x="364.5" y="285.0" width="2" height="1.9"/><rect x="368.5" y="285.0" width="2" height="1.0"/><rect x="371.5" y="283.2" width="2" height="2.8"/><rect x="375.5" y="281.5" width="2" height="4.5"/><rect x="379.5" y="279.8" width="2" height="6.2"/><rect x="382.5" y="278.5" width="2" height="7.5"/><rect x="386.5" y="276.8" width="2" height="9.2"/><rect x="390.5" y="275.6" width="2" height="10.4"/><rect x="393.5" y="274.7" width="2" height="11.3"/><rect x="397.5" y="276.2" width="2" height="9.8"/><rect x="401.5" y="277.5" width="2" height="8.5"/><rect x="404.5" y="279.2" width="2" height="6.8"/><rect x="408.5" y="281.4" width="2" height="4.6"/><rect x="412.5" y="282.6" width="2" height="3.4"/><rect x="415.5" y="283.4" width="2" height="2.6"/><rect x="419.5" y="284.4" width="2" height="1.6"/><rect x="423.5" y="284.2" width="2" height="1.8"/><rect x="426.5" y="284.0" width="2" height="2.0"/><rect x="430.5" y="283.8" width="2" height="2.2"/><rect x="434.5" y="283.2" width="2" height="2.8"/><rect x="437.5" y="282.8" width="2" height="3.2"/><rect x="441.5" y="282.2" width="2" height="3.8"/><rect x="445.5" y="282.3" width="2" height="3.7"/><rect x="448.5" y="282.5" width="2" height="3.5"/><rect x="452.5" y="282.6" width="2" height="3.4"/><rect x="456.5" y="282.6" width="2" height="3.4"/><rect x="459.5" y="282.6" width="2" height="3.4"/><rect x="463.5" y="282.6" width="2" height="3.4"/><rect x="467.5" y="282.9" width="2" height="3.1"/><rect x="470.5" y="283.1" width="2" height="2.9"/><rect x="474.5" y="283.3" width="2" height="2.7"/><rect x="478.5" y="283.7" width="2" height="2.3"/><rect x="481.5" y="284.0" width="2" height="2.0"/><rect x="485.5" y="284.4" width="2" height="1.6"/><rect x="489.5" y="284.4" width="2" height="1.6"/><rect x="492.5" y="284.4" width="2" height="1.6"/><rect x="496.5" y="284.4" width="2" height="1.6"/><rect x="500.5" y="284.6" width="2" height="1.4"/><rect x="503.5" y="284.7" width="2" height="1.3"/><rect x="507.5" y="284.9" width="2" height="1.1"/><rect x="511.5" y="285.0" width="2" height="1.0"/><rect x="514.5" y="285.0" width="2" height="1.0"/><rect x="518.5" y="285.0" width="2" height="1.8"/><rect x="522.5" y="285.0" width="2" height="2.6"/><rect x="525.5" y="285.0" width="2" height="3.7"/><rect x="529.5" y="285.0" width="2" height="5.2"/><rect x="533.5" y="285.0" width="2" height="5.3"/><rect x="536.5" y="285.0" width="2" height="5.4"/><rect x="540.5" y="285.0" width="2" height="5.6"/><rect x="544.5" y="285.0" width="2" height="5.6"/><rect x="547.5" y="285.0" width="2" height="5.6"/><rect x="551.5" y="285.0" width="2" height="5.6"/><rect x="555.5" y="285.0" width="2" height="4.7"/><rect x="558.5" y="285.0" width="2" height="4.0"/><rect x="562.5" y="285.0" width="2" height="3.0"/><rect x="566.5" y="285.0" width="2" height="2.5"/><rect x="569.5" y="285.0" width="2" height="2.2"/><rect x="573.5" y="285.0" width="2" height="1.8"/><rect x="577.5" y="285.0" width="2" height="1.5"/><rect x="580.5" y="285.0" width="2" height="1.4"/><rect x="584.5" y="285.0" width="2" height="1.2"/><rect x="588.5" y="285.0" width="2" height="2.0"/><rect x="591.5" y="285.0" width="2" height="2.6"/><rect x="595.5" y="285.0" width="2" height="3.4"/><rect x="599.5" y="285.0" width="2" height="2.7"/><rect x="602.5" y="285.0" width="2" height="2.2"/><rect x="606.5" y="285.0" width="2" height="1.6"/><rect x="610.5" y="285.0" width="2" height="1.2"/><rect x="613.5" y="285.0" width="2" height="1.0"/><rect x="617.5" y="285.0" width="2" height="1.0"/><rect x="621.5" y="285.0" width="2" height="1.0"/><rect x="624.5" y="285.0" width="2" height="1.0"/><rect x="628.5" y="285.0" width="2" height="1.1"/><rect x="632.5" y="285.0" width="2" height="2.0"/><rect x="636.5" y="285.0" width="2" height="2.9"/><rect x="639.5" y="285.0" width="2" height="3.6"/><rect x="643.5" y="285.0" width="2" height="3.8"/><rect x="647.5" y="285.0" width="2" height="3.9"/><rect x="650.5" y="285.0" width="2" height="4.0"/><rect x="654.5" y="285.0" width="2" height="4.2"/><rect x="658.5" y="285.0" width="2" height="4.4"/><rect x="661.5" y="285.0" width="2" height="4.5"/><rect x="665.5" y="285.0" width="2" height="4.1"/><rect x="669.5" y="285.0" width="2" height="3.7"/><rect x="672.5" y="285.0" width="2" height="3.4"/><rect x="676.5" y="285.0" width="2" height="3.2"/><rect x="680.5" y="285.0" width="2" height="3.0"/><rect x="683.5" y="285.0" width="2" height="2.9"/><rect x="687.5" y="285.0" width="2" height="2.6"/><rect x="691.5" y="285.0" width="2" height="2.4"/><rect x="694.5" y="285.0" width="2" height="1.8"/><rect x="698.5" y="285.0" width="2" height="1.0"/><rect x="702.5" y="285.0" width="2" height="1.0"/><rect x="705.5" y="284.9" width="2" height="1.1"/><rect x="709.5" y="284.7" width="2" height="1.3"/><rect x="713.5" y="284.5" width="2" height="1.5"/><rect x="716.5" y="284.4" width="2" height="1.6"/><rect x="720.5" y="285.0" width="2" height="1.0"/><rect x="724.5" y="285.0" width="2" height="1.0"/><rect x="727.5" y="285.0" width="2" height="1.1"/><rect x="731.5" y="285.0" width="2" height="1.3"/><rect x="735.5" y="285.0" width="2" height="1.5"/><rect x="738.5" y="285.0" width="2" height="1.6"/><rect x="742.5" y="285.0" width="2" height="1.0"/><rect x="746.5" y="285.0" width="2" height="1.0"/><rect x="749.5" y="284.9" width="2" height="1.1"/><rect x="753.5" y="284.5" width="2" height="1.5"/><rect x="757.5" y="284.2" width="2" height="1.8"/><rect x="760.5" y="284.0" width="2" height="2.0"/><rect x="764.5" y="284.5" width="2" height="1.5"/><rect x="768.5" y="285.0" width="2" height="1.0"/><rect x="771.5" y="285.0" width="2" height="1.0"/><rect x="775.5" y="285.0" width="2" height="1.0"/><rect x="779.5" y="285.0" width="2" height="1.9"/><rect x="782.5" y="285.0" width="2" height="3.4"/><rect x="786.5" y="285.0" width="2" height="4.8"/><rect x="790.5" y="285.0" width="2" height="5.2"/><rect x="793.5" y="285.0" width="2" height="5.3"/><rect x="797.5" y="285.0" width="2" height="5.1"/><rect x="801.5" y="285.0" width="2" height="4.3"/><rect x="804.5" y="285.0" width="2" height="3.8"/><rect x="808.5" y="285.0" width="2" height="3.2"/><rect x="812.5" y="285.0" width="2" height="2.5"/><rect x="815.5" y="285.0" width="2" height="2.1"/><rect x="819.5" y="285.0" width="2" height="2.5"/><rect x="823.5" y="285.0" width="2" height="3.3"/><rect x="827.5" y="285.0" width="2" height="4.5"/><rect x="830.5" y="285.0" width="2" height="5.3"/><rect x="834.5" y="285.0" width="2" height="5.8"/><rect x="838.5" y="285.0" width="2" height="6.2"/><rect x="841.5" y="285.0" width="2" height="6.2"/></g>
<path d="M10.0 295.2C11.4 295.6 14.6 297.4 20.0 297.8C25.4 298.1 40.5 297.1 47.5 297.8C54.5 298.4 64.8 301.4 68.8 302.0C72.7 302.6 72.0 303.0 75.0 302.0C78.0 301.0 86.1 297.1 90.0 295.2C93.9 293.4 99.3 290.4 102.5 289.0C105.7 287.6 110.0 286.3 112.5 285.2C115.0 284.2 117.9 281.5 120.0 281.5C122.1 281.5 124.3 284.2 127.5 285.2C130.7 286.3 138.2 288.3 142.5 289.0C146.8 289.7 152.9 289.7 157.5 290.2C162.1 290.8 170.9 292.5 175.0 292.8C179.1 293.0 183.1 293.1 186.0 292.0C188.9 290.9 192.6 287.1 195.0 285.2C197.4 283.4 200.0 280.1 202.5 279.0C205.0 277.9 209.6 278.3 212.5 277.8C215.4 277.2 220.0 275.4 222.5 275.2C225.0 275.1 227.5 275.6 230.0 276.5C232.5 277.4 237.5 280.2 240.0 281.5C242.5 282.8 245.7 285.2 247.5 285.2C249.3 285.3 250.0 282.6 252.5 282.0C255.0 281.4 262.2 281.0 265.0 281.0C267.8 281.0 268.6 281.4 272.0 282.0C275.4 282.6 284.6 284.6 288.5 285.2C292.4 285.9 296.4 285.4 299.5 286.5C302.6 287.6 307.3 290.8 310.5 292.8C313.7 294.7 318.9 298.3 322.0 300.2C325.1 302.2 329.3 304.8 332.5 306.5C335.7 308.2 341.4 311.1 344.5 312.0C347.6 312.9 351.5 312.9 354.5 312.8C357.5 312.6 363.2 312.2 365.8 311.0C368.2 309.8 370.5 305.5 372.0 304.0C373.5 302.5 374.4 302.2 376.5 300.2C378.6 298.3 384.4 292.8 387.0 290.2C389.6 287.8 392.4 284.1 394.5 282.8C396.6 281.4 399.5 281.2 402.0 281.0C404.5 280.8 409.4 281.5 412.0 281.5C414.6 281.5 417.6 281.5 420.5 281.0C423.4 280.5 428.9 278.8 432.0 277.8C435.1 276.7 439.4 274.5 442.5 273.5C445.6 272.5 450.4 271.8 453.5 271.0C456.6 270.2 461.4 268.5 464.5 267.8C467.6 267.0 472.4 266.4 475.5 266.0C478.6 265.6 483.4 265.7 486.5 265.2C489.6 264.8 493.9 263.3 497.0 262.8C500.1 262.2 506.0 261.6 508.5 261.5C511.0 261.4 512.6 261.7 514.5 262.2C516.4 262.8 519.7 264.0 522.0 265.2C524.3 266.5 527.6 269.6 530.5 271.0C533.4 272.4 538.9 274.0 542.0 275.2C545.1 276.5 549.4 279.0 552.5 279.8C555.6 280.5 560.9 280.2 564.0 280.2C567.1 280.3 571.5 280.2 574.5 280.2C577.5 280.2 582.1 279.7 585.2 280.2C588.4 280.8 593.3 283.5 596.5 284.0C599.7 284.5 604.4 284.1 607.5 284.0C610.6 283.9 615.4 283.5 618.5 283.5C621.6 283.5 626.4 283.3 629.5 284.0C632.6 284.7 637.4 287.5 640.5 288.5C643.6 289.5 648.4 290.3 651.5 291.0C654.6 291.7 659.4 293.1 662.5 293.5C665.6 293.9 670.4 293.8 673.5 294.0C676.6 294.2 681.6 295.1 684.5 295.2C687.4 295.4 690.9 296.0 694.0 295.2C697.1 294.5 703.1 291.3 706.5 290.2C709.9 289.2 714.4 287.5 717.5 287.8C720.6 288.0 725.4 291.2 728.5 292.0C731.6 292.8 736.4 293.7 739.5 293.2C742.6 292.8 747.4 290.0 750.5 289.0C753.6 288.0 758.4 286.4 761.5 286.0C764.6 285.6 769.9 285.6 772.5 286.0C775.1 286.4 778.0 287.9 780.0 289.0C782.0 290.1 784.6 292.7 786.7 294.0C788.8 295.3 792.8 297.5 794.5 298.2C796.2 298.9 795.2 298.8 798.3 299.0C801.4 299.2 812.9 298.9 816.5 299.3C820.1 299.7 821.1 300.5 823.3 301.5C825.5 302.5 829.1 305.2 831.7 306.5C834.3 307.8 840.3 310.1 841.7 310.7" fill="none" stroke="#12127a" stroke-width="1.1" stroke-linejoin="round"/>
<g fill="#f02222" stroke="#c81818" stroke-width="0.2"><circle cx="9.5" cy="292.0" r="1.65"/><circle cx="12.5" cy="292.4" r="1.65"/><circle cx="16.5" cy="293.1" r="1.65"/><circle cx="20.5" cy="293.8" r="1.65"/><circle cx="24.5" cy="294.4" r="1.65"/><circle cx="27.5" cy="294.7" r="1.65"/><circle cx="31.5" cy="295.1" r="1.65"/><circle cx="35.5" cy="295.4" r="1.65"/><circle cx="38.5" cy="295.7" r="1.65"/><circle cx="42.5" cy="296.1" r="1.65"/><circle cx="46.5" cy="296.4" r="1.65"/><circle cx="49.5" cy="296.7" r="1.65"/><circle cx="53.5" cy="297.2" r="1.65"/><circle cx="57.5" cy="297.7" r="1.65"/><circle cx="60.5" cy="298.0" r="1.65"/><circle cx="64.5" cy="298.5" r="1.65"/><circle cx="68.5" cy="299.0" r="1.65"/><circle cx="71.5" cy="299.3" r="1.65"/><circle cx="75.5" cy="299.8" r="1.65"/><circle cx="79.5" cy="300.2" r="1.65"/><circle cx="82.5" cy="299.8" r="1.65"/><circle cx="86.5" cy="299.1" r="1.65"/><circle cx="90.5" cy="298.3" r="1.65"/><circle cx="93.5" cy="297.2" r="1.65"/><circle cx="97.5" cy="295.8" r="1.65"/><circle cx="101.5" cy="294.4" r="1.65"/><circle cx="104.5" cy="293.0" r="1.65"/><circle cx="108.5" cy="291.0" r="1.65"/><circle cx="112.5" cy="289.0" r="1.65"/><circle cx="115.5" cy="288.2" r="1.65"/><circle cx="119.5" cy="287.2" r="1.65"/><circle cx="123.5" cy="286.1" r="1.65"/><circle cx="126.5" cy="285.8" r="1.65"/><circle cx="130.5" cy="285.8" r="1.65"/><circle cx="134.5" cy="285.8" r="1.65"/><circle cx="137.5" cy="286.0" r="1.65"/><circle cx="141.5" cy="286.3" r="1.65"/><circle cx="145.5" cy="286.7" r="1.65"/><circle cx="148.5" cy="286.9" r="1.65"/><circle cx="152.5" cy="287.3" r="1.65"/><circle cx="156.5" cy="287.7" r="1.65"/><circle cx="159.5" cy="288.1" r="1.65"/><circle cx="163.5" cy="288.9" r="1.65"/><circle cx="167.5" cy="289.6" r="1.65"/><circle cx="170.5" cy="290.2" r="1.65"/><circle cx="174.5" cy="290.9" r="1.65"/><circle cx="178.5" cy="291.0" r="1.65"/><circle cx="181.5" cy="291.0" r="1.65"/><circle cx="185.5" cy="291.0" r="1.65"/><circle cx="189.5" cy="290.4" r="1.65"/><circle cx="192.5" cy="289.5" r="1.65"/><circle cx="196.5" cy="288.3" r="1.65"/><circle cx="200.5" cy="287.0" r="1.65"/><circle cx="203.5" cy="285.6" r="1.65"/><circle cx="207.5" cy="283.8" r="1.65"/><circle cx="211.5" cy="282.0" r="1.65"/><circle cx="214.5" cy="280.9" r="1.65"/><circle cx="218.5" cy="279.7" r="1.65"/><circle cx="222.5" cy="278.5" r="1.65"/><circle cx="225.5" cy="277.8" r="1.65"/><circle cx="229.5" cy="277.8" r="1.65"/><circle cx="233.5" cy="277.8" r="1.65"/><circle cx="236.5" cy="277.8" r="1.65"/><circle cx="240.5" cy="278.4" r="1.65"/><circle cx="244.5" cy="279.1" r="1.65"/><circle cx="247.5" cy="279.8" r="1.65"/><circle cx="251.5" cy="280.3" r="1.65"/><circle cx="255.5" cy="280.5" r="1.65"/><circle cx="258.5" cy="280.7" r="1.65"/><circle cx="262.5" cy="280.9" r="1.65"/><circle cx="266.5" cy="281.4" r="1.65"/><circle cx="269.5" cy="282.1" r="1.65"/><circle cx="273.5" cy="282.9" r="1.65"/><circle cx="277.5" cy="283.2" r="1.65"/><circle cx="280.5" cy="283.4" r="1.65"/><circle cx="284.5" cy="283.7" r="1.65"/><circle cx="288.5" cy="284.0" r="1.65"/><circle cx="291.5" cy="284.2" r="1.65"/><circle cx="295.5" cy="284.5" r="1.65"/><circle cx="299.5" cy="284.8" r="1.65"/><circle cx="302.5" cy="285.4" r="1.65"/><circle cx="306.5" cy="286.3" r="1.65"/><circle cx="310.5" cy="287.2" r="1.65"/><circle cx="313.5" cy="288.7" r="1.65"/><circle cx="317.5" cy="290.6" r="1.65"/><circle cx="321.5" cy="292.5" r="1.65"/><circle cx="324.5" cy="294.1" r="1.65"/><circle cx="328.5" cy="296.3" r="1.65"/><circle cx="332.5" cy="298.5" r="1.65"/><circle cx="336.5" cy="300.6" r="1.65"/><circle cx="339.5" cy="302.1" r="1.65"/><circle cx="343.5" cy="304.2" r="1.65"/><circle cx="347.5" cy="305.6" r="1.65"/><circle cx="350.5" cy="306.6" r="1.65"/><circle cx="354.5" cy="307.8" r="1.65"/><circle cx="358.5" cy="308.2" r="1.65"/><circle cx="361.5" cy="308.5" r="1.65"/><circle cx="365.5" cy="309.0" r="1.65"/><circle cx="369.5" cy="307.7" r="1.65"/><circle cx="372.5" cy="306.6" r="1.65"/><circle cx="376.5" cy="305.2" r="1.65"/><circle cx="380.5" cy="303.3" r="1.65"/><circle cx="383.5" cy="301.9" r="1.65"/><circle cx="387.5" cy="299.9" r="1.65"/><circle cx="391.5" cy="297.3" r="1.65"/><circle cx="394.5" cy="295.4" r="1.65"/><circle cx="398.5" cy="292.8" r="1.65"/><circle cx="402.5" cy="290.5" r="1.65"/><circle cx="405.5" cy="288.8" r="1.65"/><circle cx="409.5" cy="286.5" r="1.65"/><circle cx="413.5" cy="285.1" r="1.65"/><circle cx="416.5" cy="284.1" r="1.65"/><circle cx="420.5" cy="282.8" r="1.65"/><circle cx="424.5" cy="281.9" r="1.65"/><circle cx="427.5" cy="281.2" r="1.65"/><circle cx="431.5" cy="280.4" r="1.65"/><circle cx="435.5" cy="279.4" r="1.65"/><circle cx="438.5" cy="278.7" r="1.65"/><circle cx="442.5" cy="277.8" r="1.65"/><circle cx="446.5" cy="276.7" r="1.65"/><circle cx="449.5" cy="275.8" r="1.65"/><circle cx="453.5" cy="274.8" r="1.65"/><circle cx="457.5" cy="273.6" r="1.65"/><circle cx="460.5" cy="272.7" r="1.65"/><circle cx="464.5" cy="271.5" r="1.65"/><circle cx="468.5" cy="270.6" r="1.65"/><circle cx="471.5" cy="269.9" r="1.65"/><circle cx="475.5" cy="269.0" r="1.65"/><circle cx="479.5" cy="268.3" r="1.65"/><circle cx="482.5" cy="267.7" r="1.65"/><circle cx="486.5" cy="267.0" r="1.65"/><circle cx="490.5" cy="266.0" r="1.65"/><circle cx="493.5" cy="265.3" r="1.65"/><circle cx="497.5" cy="264.4" r="1.65"/><circle cx="501.5" cy="263.8" r="1.65"/><circle cx="504.5" cy="263.4" r="1.65"/><circle cx="508.5" cy="262.8" r="1.65"/><circle cx="512.5" cy="262.6" r="1.65"/><circle cx="515.5" cy="262.4" r="1.65"/><circle cx="519.5" cy="262.2" r="1.65"/><circle cx="523.5" cy="263.3" r="1.65"/><circle cx="526.5" cy="264.2" r="1.65"/><circle cx="530.5" cy="265.2" r="1.65"/><circle cx="534.5" cy="266.6" r="1.65"/><circle cx="537.5" cy="267.5" r="1.65"/><circle cx="541.5" cy="268.8" r="1.65"/><circle cx="545.5" cy="270.5" r="1.65"/><circle cx="548.5" cy="271.8" r="1.65"/><circle cx="552.5" cy="273.5" r="1.65"/><circle cx="556.5" cy="274.7" r="1.65"/><circle cx="559.5" cy="275.6" r="1.65"/><circle cx="563.5" cy="276.8" r="1.65"/><circle cx="567.5" cy="277.4" r="1.65"/><circle cx="570.5" cy="277.8" r="1.65"/><circle cx="574.5" cy="278.2" r="1.65"/><circle cx="578.5" cy="278.5" r="1.65"/><circle cx="581.5" cy="278.7" r="1.65"/><circle cx="585.5" cy="279.0" r="1.65"/><circle cx="589.5" cy="279.5" r="1.65"/><circle cx="592.5" cy="279.8" r="1.65"/><circle cx="596.5" cy="280.2" r="1.65"/><circle cx="600.5" cy="281.0" r="1.65"/><circle cx="603.5" cy="281.5" r="1.65"/><circle cx="607.5" cy="282.2" r="1.65"/><circle cx="611.5" cy="282.4" r="1.65"/><circle cx="614.5" cy="282.6" r="1.65"/><circle cx="618.5" cy="282.8" r="1.65"/><circle cx="622.5" cy="282.8" r="1.65"/><circle cx="625.5" cy="282.8" r="1.65"/><circle cx="629.5" cy="282.8" r="1.65"/><circle cx="633.5" cy="283.4" r="1.65"/><circle cx="637.5" cy="284.0" r="1.65"/><circle cx="640.5" cy="284.5" r="1.65"/><circle cx="644.5" cy="285.2" r="1.65"/><circle cx="648.5" cy="286.0" r="1.65"/><circle cx="651.5" cy="286.5" r="1.65"/><circle cx="655.5" cy="287.2" r="1.65"/><circle cx="659.5" cy="288.0" r="1.65"/><circle cx="662.5" cy="288.5" r="1.65"/><circle cx="666.5" cy="289.1" r="1.65"/><circle cx="670.5" cy="289.8" r="1.65"/><circle cx="673.5" cy="290.2" r="1.65"/><circle cx="677.5" cy="290.9" r="1.65"/><circle cx="681.5" cy="291.5" r="1.65"/><circle cx="684.5" cy="292.0" r="1.65"/><circle cx="688.5" cy="292.3" r="1.65"/><circle cx="692.5" cy="292.6" r="1.65"/><circle cx="695.5" cy="292.6" r="1.65"/><circle cx="699.5" cy="292.2" r="1.65"/><circle cx="703.5" cy="291.8" r="1.65"/><circle cx="706.5" cy="291.5" r="1.65"/><circle cx="710.5" cy="290.8" r="1.65"/><circle cx="714.5" cy="290.0" r="1.65"/><circle cx="717.5" cy="289.5" r="1.65"/><circle cx="721.5" cy="290.0" r="1.65"/><circle cx="725.5" cy="290.4" r="1.65"/><circle cx="728.5" cy="290.8" r="1.65"/><circle cx="732.5" cy="291.0" r="1.65"/><circle cx="736.5" cy="291.3" r="1.65"/><circle cx="739.5" cy="291.5" r="1.65"/><circle cx="743.5" cy="291.0" r="1.65"/><circle cx="747.5" cy="290.6" r="1.65"/><circle cx="750.5" cy="290.2" r="1.65"/><circle cx="754.5" cy="289.5" r="1.65"/><circle cx="758.5" cy="288.8" r="1.65"/><circle cx="761.5" cy="288.2" r="1.65"/><circle cx="765.5" cy="287.7" r="1.65"/><circle cx="769.5" cy="287.1" r="1.65"/><circle cx="772.5" cy="286.6" r="1.65"/><circle cx="776.5" cy="286.9" r="1.65"/><circle cx="780.5" cy="287.2" r="1.65"/><circle cx="783.5" cy="287.8" r="1.65"/><circle cx="787.5" cy="289.1" r="1.65"/><circle cx="791.5" cy="290.8" r="1.65"/><circle cx="794.5" cy="292.3" r="1.65"/><circle cx="798.5" cy="293.3" r="1.65"/><circle cx="802.5" cy="294.3" r="1.65"/><circle cx="805.5" cy="294.9" r="1.65"/><circle cx="809.5" cy="295.7" r="1.65"/><circle cx="813.5" cy="296.4" r="1.65"/><circle cx="816.5" cy="297.0" r="1.65"/><circle cx="820.5" cy="297.8" r="1.65"/><circle cx="824.5" cy="298.6" r="1.65"/><circle cx="828.5" cy="299.5" r="1.65"/><circle cx="831.5" cy="300.4" r="1.65"/><circle cx="835.5" cy="301.7" r="1.65"/><circle cx="839.5" cy="302.9" r="1.65"/><circle cx="842.5" cy="303.8" r="1.65"/></g>
<rect x="10" y="259" width="31" height="13" fill="#3b434b"/>
<text x="12" y="269.9" textLength="28" lengthAdjust="spacingAndGlyphs" font-family="Liberation Sans, sans-serif" font-size="10.8" fill="#14146e">MACD</text>
<path d="M15.0 371.5L18.8 370.2L23.8 365.2L28.8 367.8L32.5 371.5L35.5 367.0L38.0 374.0L42.0 365.2L46.2 369.0L50.0 367.8L53.8 373.5L57.5 365.2L62.0 374.0L67.5 375.2L72.5 371.5L76.2 371.5L86.2 349.5L90.0 354.5L93.8 354.5L98.0 348.2L102.5 349.5L106.2 346.5L110.0 350.2L116.2 341.5L120.0 349.0L123.8 348.5L127.5 367.0L131.2 361.5L135.0 362.0L138.8 361.0L142.5 366.5L145.8 355.2L150.0 360.2L155.0 359.5L165.0 364.0L168.0 367.8L175.0 359.0L178.8 360.2L184.5 363.5L190.0 344.0L197.5 332.0L201.2 333.5L205.0 336.5L207.5 344.0L212.0 350.2L216.2 342.0L222.5 340.2L226.2 341.0L233.8 363.5L237.5 355.2L240.5 360.2L244.5 362.0L255.0 344.0L260.0 352.8L265.0 355.2L268.8 356.5L272.0 354.0L275.8 353.5L281.5 359.0L288.5 356.5L293.2 354.0L295.8 348.5L299.5 359.0L303.2 367.8L307.0 371.5L310.8 373.5L313.2 372.0L317.0 377.8L320.8 381.0L325.8 385.2L330.0 383.2L334.5 384.5L338.2 384.5L340.8 387.8L343.8 394.0L347.0 382.0L350.8 381.0L354.5 379.0L358.2 382.8L362.0 377.8L365.8 372.8L369.5 356.5L372.0 352.8L376.5 356.0L382.0 350.2L387.5 342.0L391.5 342.0L395.8 341.0L399.5 340.8L403.2 346.5L405.8 352.8L409.5 346.5L412.0 346.0L418.2 351.5L424.5 347.0L429.5 342.8L433.2 337.8L435.8 332.8L439.0 334.5L444.5 333.5L445.8 332.8L448.2 341.5L450.8 350.2L454.0 339.0L458.2 331.5L462.0 332.8L467.0 334.5L471.2 332.0L475.0 339.0L479.5 335.2L484.5 333.5L489.0 330.2L491.0 328.2L492.0 326.5L495.8 327.0L499.5 324.8L503.2 324.8L507.0 327.8L507.8 328.5L508.2 330.2L512.0 331.0L516.5 326.5L519.5 336.5L523.2 351.5L527.0 349.8L530.8 352.8L534.5 352.2L537.8 347.8L541.5 354.5L544.0 355.2L547.8 354.5L551.5 352.8L555.2 354.0L559.0 351.0L564.0 346.5L569.0 347.8L574.0 352.8L577.8 346.0L581.5 344.0L586.0 342.2L589.0 354.0L592.8 359.5L597.0 360.2L601.0 357.0L604.5 350.2L606.5 352.8L611.5 345.2L616.5 347.0L619.0 350.8L626.5 350.8L630.2 359.0L634.0 369.0L637.8 362.8L640.2 367.8L644.0 366.0L647.8 367.2L651.5 359.0L655.2 368.5L661.5 367.8L665.2 367.0L670.2 360.2L674.0 365.2L677.8 369.0L681.5 367.0L685.2 371.0L689.0 369.5L692.8 374.0L696.5 355.2L699.5 350.2L704.0 354.0L707.8 352.2L712.8 354.0L716.5 359.0L721.5 368.5L725.2 371.0L731.0 367.8L736.0 371.5L740.2 355.2L744.0 348.5L749.0 351.0L754.0 351.0L761.5 348.5L765.2 355.2L770.2 359.0L774.0 362.8L779.0 369.0L782.8 377.8L784.5 380.8L787.0 387.2L790.2 381.5L794.0 381.2L798.5 381.0L799.0 379.0L805.2 369.5L809.5 374.0L813.5 370.2L817.0 376.5L820.2 379.0L821.0 380.8L824.0 386.5L827.0 384.0L832.0 389.0L836.0 391.1L839.8 390.3L841.6 391.5L841.6 397L15.0 397Z" fill="url(#rsif)" clip-path="url(#cr)"/>
<path d="M10 328.8H842M10 381.2H842" stroke="#1a1ab4" stroke-width="1.6" fill="none"/>
<path d="M15.0 371.5L18.8 370.2L23.8 365.2L28.8 367.8L32.5 371.5L35.5 367.0L38.0 374.0L42.0 365.2L46.2 369.0L50.0 367.8L53.8 373.5L57.5 365.2L62.0 374.0L67.5 375.2L72.5 371.5L76.2 371.5L86.2 349.5L90.0 354.5L93.8 354.5L98.0 348.2L102.5 349.5L106.2 346.5L110.0 350.2L116.2 341.5L120.0 349.0L123.8 348.5L127.5 367.0L131.2 361.5L135.0 362.0L138.8 361.0L142.5 366.5L145.8 355.2L150.0 360.2L155.0 359.5L165.0 364.0L168.0 367.8L175.0 359.0L178.8 360.2L184.5 363.5L190.0 344.0L197.5 332.0L201.2 333.5L205.0 336.5L207.5 344.0L212.0 350.2L216.2 342.0L222.5 340.2L226.2 341.0L233.8 363.5L237.5 355.2L240.5 360.2L244.5 362.0L255.0 344.0L260.0 352.8L265.0 355.2L268.8 356.5L272.0 354.0L275.8 353.5L281.5 359.0L288.5 356.5L293.2 354.0L295.8 348.5L299.5 359.0L303.2 367.8L307.0 371.5L310.8 373.5L313.2 372.0L317.0 377.8L320.7 381.0M350.8 381.0L354.5 379.0L358.2 382.8L362.0 377.8L365.8 372.8L369.5 356.5L372.0 352.8L376.5 356.0L382.0 350.2L387.5 342.0L391.5 342.0L395.8 341.0L399.5 340.8L403.2 346.5L405.8 352.8L409.5 346.5L412.0 346.0L418.2 351.5L424.5 347.0L429.5 342.8L433.2 337.8L435.8 332.8L439.0 334.5L444.5 333.5L445.8 332.8L448.2 341.5L450.8 350.2L454.0 339.0L458.2 331.5L462.0 332.8L467.0 334.5L471.2 332.0L475.0 339.0L479.5 335.2L484.5 333.5L489.0 330.2L490.0 329.2M517.6 330.2L519.5 336.5L523.2 351.5L527.0 349.8L530.8 352.8L534.5 352.2L537.8 347.8L541.5 354.5L544.0 355.2L547.8 354.5L551.5 352.8L555.2 354.0L559.0 351.0L564.0 346.5L569.0 347.8L574.0 352.8L577.8 346.0L581.5 344.0L586.0 342.2L589.0 354.0L592.8 359.5L597.0 360.2L601.0 357.0L604.5 350.2L606.5 352.8L611.5 345.2L616.5 347.0L619.0 350.8L626.5 350.8L630.2 359.0L634.0 369.0L637.8 362.8L640.2 367.8L644.0 366.0L647.8 367.2L651.5 359.0L655.2 368.5L661.5 367.8L665.2 367.0L670.2 360.2L674.0 365.2L677.8 369.0L681.5 367.0L685.2 371.0L689.0 369.5L692.8 374.0L696.5 355.2L699.5 350.2L704.0 354.0L707.8 352.2L712.8 354.0L716.5 359.0L721.5 368.5L725.2 371.0L731.0 367.8L736.0 371.5L740.2 355.2L744.0 348.5L749.0 351.0L754.0 351.0L761.5 348.5L765.2 355.2L770.2 359.0L774.0 362.8L779.0 369.0L782.8 377.8L783.6 379.2M790.3 381.5L790.3 381.5M798.5 381.0L799.0 379.0L805.2 369.5L809.5 374.0L813.5 370.2L817.0 376.5L820.2 379.0L820.3 379.1M842.0 391.5L841.6 391.5" fill="none" stroke="#f0943a" stroke-width="1" stroke-linejoin="round"/>
<path d="M320.7 381.0L320.8 381.0L325.8 385.2L330.0 383.2L334.5 384.5L338.2 384.5L340.8 387.8L343.8 394.0L347.0 382.0L350.8 381.0L350.8 381.0" fill="none" stroke="#28d838" stroke-width="1.05" stroke-linejoin="round"/>
<path d="M490.0 329.2L491.0 328.2L492.0 326.5L495.8 327.0L499.5 324.8L503.2 324.8L507.0 327.8L507.8 328.5L508.2 330.2L512.0 331.0L516.5 326.5L517.6 330.2" fill="none" stroke="#b833dc" stroke-width="1.05" stroke-linejoin="round"/>
<path d="M783.6 379.2L784.5 380.8L787.0 387.2L790.2 381.5L790.3 381.5" fill="none" stroke="#28d838" stroke-width="1.05" stroke-linejoin="round"/>
<path d="M790.3 381.5L794.0 381.2L798.5 381.0" fill="none" stroke="#30d8c8" stroke-width="1.05" stroke-linejoin="round"/>
<path d="M820.3 379.1L821.0 380.8L824.0 386.5L827.0 384.0L832.0 389.0L836.0 391.1L839.8 390.3L841.6 391.5L842.0 391.5" fill="none" stroke="#28d838" stroke-width="1.05" stroke-linejoin="round"/>
<rect x="10" y="322" width="17.3" height="12" fill="#3b434b"/>
<text x="12" y="332.8" textLength="14.5" lengthAdjust="spacingAndGlyphs" font-family="Liberation Sans, sans-serif" font-size="10" fill="#f09030">RSI</text>
<rect x="9.5" y="36.5" width="870" height="216" fill="none" stroke="#adbed2" stroke-width="1" shape-rendering="crispEdges"/>
<rect x="9.5" y="258.5" width="870" height="57" fill="none" stroke="#adbed2" stroke-width="1" shape-rendering="crispEdges"/>
<rect x="9.5" y="321.5" width="870" height="76" fill="none" stroke="#adbed2" stroke-width="1" shape-rendering="crispEdges"/>
<rect x="9" y="36" width="31" height="22" fill="#f6f6f6"/><rect x="9" y="36" width="31" height="4.7" fill="#dadada"/>
<rect x="13.7" y="44.6" width="8.4" height="8.9" rx="1.2" fill="url(#redb)" stroke="#a81a22" stroke-width="1"/><rect x="26.6" y="44.6" width="8.8" height="8.9" rx="1.2" fill="url(#blub)" stroke="#166a9e" stroke-width="1"/>
<path d="M879 53.5H883" stroke="#adbed2" stroke-width="1" shape-rendering="crispEdges"/>
<text x="887" y="60.0" text-anchor="start" textLength="32.2" lengthAdjust="spacingAndGlyphs" font-family="Liberation Sans, sans-serif" font-size="11.1" fill="#fafafa" stroke="#fafafa" stroke-width="0.2">1.4000</text>
<path d="M879 99.5H883" stroke="#adbed2" stroke-width="1" shape-rendering="crispEdges"/>
<text x="887" y="106.0" text-anchor="start" textLength="32.2" lengthAdjust="spacingAndGlyphs" font-family="Liberation Sans, sans-serif" font-size="11.1" fill="#fafafa" stroke="#fafafa" stroke-width="0.2">1.3900</text>
<path d="M879 144.5H883" stroke="#adbed2" stroke-width="1" shape-rendering="crispEdges"/>
<text x="887" y="151.0" text-anchor="start" textLength="32.2" lengthAdjust="spacingAndGlyphs" font-family="Liberation Sans, sans-serif" font-size="11.1" fill="#fafafa" stroke="#fafafa" stroke-width="0.2">1.3800</text>
<path d="M879 189.5H883" stroke="#adbed2" stroke-width="1" shape-rendering="crispEdges"/>
<text x="887" y="196.0" text-anchor="start" textLength="32.2" lengthAdjust="spacingAndGlyphs" font-family="Liberation Sans, sans-serif" font-size="11.1" fill="#fafafa" stroke="#fafafa" stroke-width="0.2">1.3700</text>
<path d="M879 234.5H883" stroke="#adbed2" stroke-width="1" shape-rendering="crispEdges"/>
<text x="887" y="241.0" text-anchor="start" textLength="32.2" lengthAdjust="spacingAndGlyphs" font-family="Liberation Sans, sans-serif" font-size="11.1" fill="#fafafa" stroke="#fafafa" stroke-width="0.2">1.3600</text>
<path d="M879 285.5H883M879 341.5H883M879 367.5H883" stroke="#adbed2" stroke-width="1" shape-rendering="crispEdges"/>
<text x="887.5" y="292" text-anchor="start" textLength="24.0" lengthAdjust="spacingAndGlyphs" font-family="Liberation Sans, sans-serif" font-size="11.1" fill="#fafafa" stroke="#fafafa" stroke-width="0.2">-0.00</text>
<text x="887" y="348" text-anchor="start" textLength="11.7" lengthAdjust="spacingAndGlyphs" font-family="Liberation Sans, sans-serif" font-size="11.1" fill="#fafafa" stroke="#fafafa" stroke-width="0.2">60</text>
<text x="887" y="374" text-anchor="start" textLength="11.7" lengthAdjust="spacingAndGlyphs" font-family="Liberation Sans, sans-serif" font-size="11.1" fill="#fafafa" stroke="#fafafa" stroke-width="0.2">40</text>
<rect x="879" y="211" width="48" height="21" fill="#ffffff"/>
<text x="888" y="225.1" text-anchor="start" textLength="32.2" lengthAdjust="spacingAndGlyphs" font-family="Liberation Sans, sans-serif" font-size="11.1" fill="#3c444c" stroke="#3c444c" stroke-width="0.2">1.3629</text>
<text x="23.7" y="420" text-anchor="middle" textLength="11.7" lengthAdjust="spacingAndGlyphs" font-family="Liberation Sans, sans-serif" font-size="11.1" fill="#fafafa" stroke="#fafafa" stroke-width="0.2">30</text>
<text x="45.7" y="420" text-anchor="middle" textLength="5.9" lengthAdjust="spacingAndGlyphs" font-family="Liberation Sans, sans-serif" font-size="11.1" fill="#fafafa" stroke="#fafafa" stroke-width="0.2">1</text>
<text x="67.7" y="420" text-anchor="middle" textLength="5.9" lengthAdjust="spacingAndGlyphs" font-family="Liberation Sans, sans-serif" font-size="11.1" fill="#fafafa" stroke="#fafafa" stroke-width="0.2">2</text>
<text x="89.7" y="420" text-anchor="middle" textLength="5.9" lengthAdjust="spacingAndGlyphs" font-family="Liberation Sans, sans-serif" font-size="11.1" fill="#fafafa" stroke="#fafafa" stroke-width="0.2">5</text>
<text x="111.7" y="420" text-anchor="middle" textLength="5.9" lengthAdjust="spacingAndGlyphs" font-family="Liberation Sans, sans-serif" font-size="11.1" fill="#fafafa" stroke="#fafafa" stroke-width="0.2">6</text>
<text x="133.7" y="420" text-anchor="middle" textLength="5.9" lengthAdjust="spacingAndGlyphs" font-family="Liberation Sans, sans-serif" font-size="11.1" fill="#fafafa" stroke="#fafafa" stroke-width="0.2">7</text>
<text x="155.7" y="420" text-anchor="middle" textLength="5.9" lengthAdjust="spacingAndGlyphs" font-family="Liberation Sans, sans-serif" font-size="11.1" fill="#fafafa" stroke="#fafafa" stroke-width="0.2">8</text>
<text x="177.7" y="420" text-anchor="middle" textLength="5.9" lengthAdjust="spacingAndGlyphs" font-family="Liberation Sans, sans-serif" font-size="11.1" fill="#fafafa" stroke="#fafafa" stroke-width="0.2">9</text>
<text x="199.7" y="420" text-anchor="middle" textLength="11.7" lengthAdjust="spacingAndGlyphs" font-family="Liberation Sans, sans-serif" font-size="11.1" fill="#fafafa" stroke="#fafafa" stroke-width="0.2">12</text>
<text x="221.7" y="420" text-anchor="middle" textLength="11.7" lengthAdjust="spacingAndGlyphs" font-family="Liberation Sans, sans-serif" font-size="11.1" fill="#fafafa" stroke="#fafafa" stroke-width="0.2">13</text>
<text x="243.7" y="420" text-anchor="middle" textLength="11.7" lengthAdjust="spacingAndGlyphs" font-family="Liberation Sans, sans-serif" font-size="11.1" fill="#fafafa" stroke="#fafafa" stroke-width="0.2">14</text>
<text x="265.7" y="420" text-anchor="middle" textLength="11.7" lengthAdjust="spacingAndGlyphs" font-family="Liberation Sans, sans-serif" font-size="11.1" fill="#fafafa" stroke="#fafafa" stroke-width="0.2">15</text>
<text x="287.7" y="420" text-anchor="middle" textLength="11.7" lengthAdjust="spacingAndGlyphs" font-family="Liberation Sans, sans-serif" font-size="11.1" fill="#fafafa" stroke="#fafafa" stroke-width="0.2">16</text>
<text x="309.7" y="420" text-anchor="middle" textLength="11.7" lengthAdjust="spacingAndGlyphs" font-family="Liberation Sans, sans-serif" font-size="11.1" fill="#fafafa" stroke="#fafafa" stroke-width="0.2">19</text>
<text x="331.7" y="420" text-anchor="middle" textLength="11.7" lengthAdjust="spacingAndGlyphs" font-family="Liberation Sans, sans-serif" font-size="11.1" fill="#fafafa" stroke="#fafafa" stroke-width="0.2">20</text>
<text x="353.7" y="420" text-anchor="middle" textLength="11.7" lengthAdjust="spacingAndGlyphs" font-family="Liberation Sans, sans-serif" font-size="11.1" fill="#fafafa" stroke="#fafafa" stroke-width="0.2">21</text>
<text x="375.7" y="420" text-anchor="middle" textLength="11.7" lengthAdjust="spacingAndGlyphs" font-family="Liberation Sans, sans-serif" font-size="11.1" fill="#fafafa" stroke="#fafafa" stroke-width="0.2">22</text>
<text x="397.7" y="420" text-anchor="middle" textLength="11.7" lengthAdjust="spacingAndGlyphs" font-family="Liberation Sans, sans-serif" font-size="11.1" fill="#fafafa" stroke="#fafafa" stroke-width="0.2">23</text>
<text x="419.7" y="420" text-anchor="middle" textLength="11.7" lengthAdjust="spacingAndGlyphs" font-family="Liberation Sans, sans-serif" font-size="11.1" fill="#fafafa" stroke="#fafafa" stroke-width="0.2">26</text>
<text x="441.7" y="420" text-anchor="middle" textLength="11.7" lengthAdjust="spacingAndGlyphs" font-family="Liberation Sans, sans-serif" font-size="11.1" fill="#fafafa" stroke="#fafafa" stroke-width="0.2">27</text>
<text x="463.7" y="420" text-anchor="middle" textLength="11.7" lengthAdjust="spacingAndGlyphs" font-family="Liberation Sans, sans-serif" font-size="11.1" fill="#fafafa" stroke="#fafafa" stroke-width="0.2">28</text>
<text x="485.7" y="420" text-anchor="middle" textLength="11.7" lengthAdjust="spacingAndGlyphs" font-family="Liberation Sans, sans-serif" font-size="11.1" fill="#fafafa" stroke="#fafafa" stroke-width="0.2">29</text>
<text x="507.7" y="420" text-anchor="middle" textLength="11.7" lengthAdjust="spacingAndGlyphs" font-family="Liberation Sans, sans-serif" font-size="11.1" fill="#fafafa" stroke="#fafafa" stroke-width="0.2">30</text>
<text x="529.7" y="420" text-anchor="middle" textLength="5.9" lengthAdjust="spacingAndGlyphs" font-family="Liberation Sans, sans-serif" font-size="11.1" fill="#fafafa" stroke="#fafafa" stroke-width="0.2">2</text>
<text x="551.7" y="420" text-anchor="middle" textLength="5.9" lengthAdjust="spacingAndGlyphs" font-family="Liberation Sans, sans-serif" font-size="11.1" fill="#fafafa" stroke="#fafafa" stroke-width="0.2">3</text>
<text x="573.7" y="420" text-anchor="middle" textLength="5.9" lengthAdjust="spacingAndGlyphs" font-family="Liberation Sans, sans-serif" font-size="11.1" fill="#fafafa" stroke="#fafafa" stroke-width="0.2">4</text>
<text x="595.7" y="420" text-anchor="middle" textLength="5.9" lengthAdjust="spacingAndGlyphs" font-family="Liberation Sans, sans-serif" font-size="11.1" fill="#fafafa" stroke="#fafafa" stroke-width="0.2">5</text>
<text x="617.7" y="420" text-anchor="middle" textLength="5.9" lengthAdjust="spacingAndGlyphs" font-family="Liberation Sans, sans-serif" font-size="11.1" fill="#fafafa" stroke="#fafafa" stroke-width="0.2">6</text>
<text x="639.7" y="420" text-anchor="middle" textLength="5.9" lengthAdjust="spacingAndGlyphs" font-family="Liberation Sans, sans-serif" font-size="11.1" fill="#fafafa" stroke="#fafafa" stroke-width="0.2">9</text>
<text x="661.7" y="420" text-anchor="middle" textLength="11.7" lengthAdjust="spacingAndGlyphs" font-family="Liberation Sans, sans-serif" font-size="11.1" fill="#fafafa" stroke="#fafafa" stroke-width="0.2">10</text>
<text x="683.7" y="420" text-anchor="middle" textLength="11.7" lengthAdjust="spacingAndGlyphs" font-family="Liberation Sans, sans-serif" font-size="11.1" fill="#fafafa" stroke="#fafafa" stroke-width="0.2">11</text>
<text x="705.7" y="420" text-anchor="middle" textLength="11.7" lengthAdjust="spacingAndGlyphs" font-family="Liberation Sans, sans-serif" font-size="11.1" fill="#fafafa" stroke="#fafafa" stroke-width="0.2">12</text>
<text x="727.7" y="420" text-anchor="middle" textLength="11.7" lengthAdjust="spacingAndGlyphs" font-family="Liberation Sans, sans-serif" font-size="11.1" fill="#fafafa" stroke="#fafafa" stroke-width="0.2">13</text>
<text x="749.7" y="420" text-anchor="middle" textLength="11.7" lengthAdjust="spacingAndGlyphs" font-family="Liberation Sans, sans-serif" font-size="11.1" fill="#fafafa" stroke="#fafafa" stroke-width="0.2">16</text>
<text x="771.7" y="420" text-anchor="middle" textLength="11.7" lengthAdjust="spacingAndGlyphs" font-family="Liberation Sans, sans-serif" font-size="11.1" fill="#fafafa" stroke="#fafafa" stroke-width="0.2">17</text>
<text x="793.7" y="420" text-anchor="middle" textLength="11.7" lengthAdjust="spacingAndGlyphs" font-family="Liberation Sans, sans-serif" font-size="11.1" fill="#fafafa" stroke="#fafafa" stroke-width="0.2">18</text>
<text x="815.7" y="420" text-anchor="middle" textLength="11.7" lengthAdjust="spacingAndGlyphs" font-family="Liberation Sans, sans-serif" font-size="11.1" fill="#fafafa" stroke="#fafafa" stroke-width="0.2">19</text>
<text x="838.7" y="420" text-anchor="middle" textLength="11.7" lengthAdjust="spacingAndGlyphs" font-family="Liberation Sans, sans-serif" font-size="11.1" fill="#fafafa" stroke="#fafafa" stroke-width="0.2">20</text>
<text x="860.7" y="420" text-anchor="middle" textLength="11.7" lengthAdjust="spacingAndGlyphs" font-family="Liberation Sans, sans-serif" font-size="11.1" fill="#fafafa" stroke="#fafafa" stroke-width="0.2">21</text>
<path d="M24.5 397V401M46.5 397V401M68.5 397V401M90.5 397V401M112.5 397V401M134.5 397V401M156.5 397V401M178.5 397V401M200.5 397V401M222.5 397V401M244.5 397V401M266.5 397V401M288.5 397V401M310.5 397V401M332.5 397V401M354.5 397V401M376.5 397V401M398.5 397V401M420.5 397V401M442.5 397V401M464.5 397V401M486.5 397V401M508.5 397V401M530.5 397V401M552.5 397V401M574.5 397V401M596.5 397V401M618.5 397V401M640.5 397V401M662.5 397V401M684.5 397V401M706.5 397V401M728.5 397V401M750.5 397V401M772.5 397V401M794.5 397V401M816.5 397V401M839.5 397V401M861.5 397V401" stroke="#adbed2" stroke-width="1" shape-rendering="crispEdges"/>
<path d="M10.5 375H45Q48 375 48 378V390.5Q48 393.5 45 393.5H10.5Z" fill="url(#mon)" stroke="#a8c0d4" stroke-width="1.2"/>
<path d="M10.5 375V401" stroke="#c4e2e2" stroke-width="2"/>
<text x="17.5" y="388" font-family="Liberation Sans, sans-serif" font-size="10.8" fill="#f4f4f4">Июнь</text>
<path d="M47 375H113Q116 375 116 378V390.5Q116 393.5 113 393.5H47Z" fill="url(#mon)" stroke="#a8c0d4" stroke-width="1.2"/>
<path d="M47 375V401" stroke="#c4e2e2" stroke-width="2"/>
<text x="54" y="388" font-family="Liberation Sans, sans-serif" font-size="10.8" fill="#f4f4f4">Июль 2021</text>
<path d="M531 375H587.5Q590.5 375 590.5 378V390.5Q590.5 393.5 587.5 393.5H531Z" fill="url(#mon)" stroke="#a8c0d4" stroke-width="1.2"/>
<path d="M531 375V401" stroke="#c4e2e2" stroke-width="2"/>
<text x="539.3" y="388" font-family="Liberation Sans, sans-serif" font-size="10.8" fill="#f4f4f4">Авг 2021</text>
</svg>
</body></html>
